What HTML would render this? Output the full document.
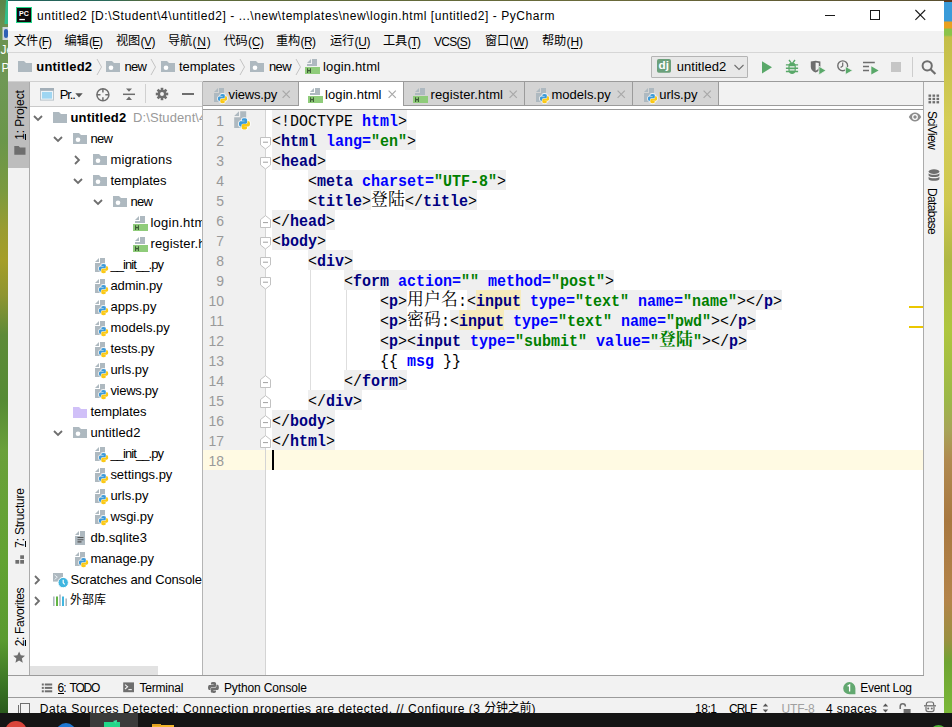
<!DOCTYPE html>
<html><head><meta charset="utf-8"><title>untitled2 - PyCharm</title>
<style>
html,body{margin:0;padding:0}
body{width:952px;height:727px;overflow:hidden;position:relative;background:#f2f2f2;font-family:"Liberation Sans",sans-serif}
.a{position:absolute;display:block}
.t{white-space:pre}
.c,.cb{font:400 16.5px/20px "Liberation Mono",monospace;transform:scaleX(.909);transform-origin:0 0}
.cb{font-weight:700}
</style></head><body>
<div class="a" style="left:0px;top:0px;width:8px;height:713px;background:linear-gradient(180deg,#5a8548 0px,#6a9050 25px,#6f9855 80px,#6a964a 140px,#7a9a40 190px,#9a9c30 230px,#a59e28 260px,#8f9530 295px,#5d8a38 335px,#558a34 400px,#6aa03a 450px,#62a232 560px,#5a9a30 640px,#3a7424 685px,#2a5a1c 713px);"></div>
<svg class="a" style="left:0px;top:0px;" width="8" height="80" viewBox="0 0 8 80"><path d="M6,0H8V24H4.5Z" fill="#2fbf8a"/><rect x="2.5" y="27" width="5.5" height="13" fill="#cfd6dc"/><rect x="4" y="29" width="4" height="9" rx="2" fill="#2f5fb4"/><text x="0.5" y="54" font-family="Liberation Sans,sans-serif" font-size="12" fill="#fff">Je</text><text x="1.5" y="71.5" font-family="Liberation Sans,sans-serif" font-size="12" fill="#fff">P</text></svg>
<div class="a" style="left:944px;top:0px;width:8px;height:713px;background:linear-gradient(180deg,#5a3a20 0px,#5a3a20 2px,#3a9bd9 2px,#3a9bd9 21px,#e8a020 22px,#e8a020 28px,#8bc34a 29px,#8bc34a 35px,#c4be48 37px,#d4cd56 120px,#cfc850 200px,#b0b844 260px,#aec63e 330px,#9cb848 400px,#a8a458 430px,#b08a50 460px,#a87840 520px,#b4844a 600px,#9a9040 640px,#6fa432 662px,#7ab838 713px);"></div>
<div class="a" style="left:0px;top:713px;width:952px;height:14px;background:#151515;"></div>
<div class="a" style="left:90px;top:713px;width:48px;height:14px;background:#3b3b3b;"></div>
<div class="a" style="left:5px;top:721px;width:22px;height:22px;background:#d9453b;border-radius:11px"></div>
<div class="a" style="left:56px;top:723px;width:20px;height:20px;background:#1e78d2;border-radius:10px"></div>
<svg class="a" style="left:103px;top:720px;" width="18" height="8" viewBox="0 0 18 8"><path d="M1,2H11L14,0V2H17V8H1Z" fill="#21d789"/><path d="M10,1L14,0L13,4Z" fill="#3ce0a0"/></svg>
<div class="a" style="left:152px;top:724.5px;width:22px;height:4px;background:#f2b62b;"></div>
<div class="a" style="left:152px;top:723.5px;width:9px;height:2px;background:#e0a020;"></div>
<div class="a" style="left:929.5px;top:724.6px;width:17px;height:17px;background:#4cb034;border-radius:9px"></div>
<div class="a" style="left:8px;top:0px;width:936px;height:713px;background:#f2f2f2;"></div>
<div class="a" style="left:8px;top:0px;width:936px;height:1px;background:linear-gradient(90deg,#1f5f5a 0px,#2a6a5a 100px,#5a6a3a 140px,#6a6a3a 600px,#5a5030 936px);"></div>
<div class="a" style="left:8px;top:1px;width:936px;height:30px;background:#ffffff;"></div>
<svg class="a" style="left:16px;top:7px;" width="16" height="16" viewBox="0 0 16 16"><rect x="0" y="0" width="16" height="16" fill="#21d789"/><rect x="1" y="1" width="14" height="14" fill="#0c0c0c"/><text x="3" y="8.8" font-family="Liberation Sans,sans-serif" font-weight="700" font-size="7.5" fill="#fff" textLength="9.8" lengthAdjust="spacingAndGlyphs">PC</text><rect x="3.3" y="11.9" width="5.6" height="1.3" fill="#fff"/></svg>
<span id="t1" class="a t" style="left:37px;top:9.84px;font:400 12px/12px 'Liberation Sans',sans-serif;color:#000;letter-spacing:0.547px;">untitled2 [D:\Student\4\untitled2] - ...\new\templates\new\login.html [untitled2] - PyCharm</span>
<div class="a" style="left:824.5px;top:15px;width:10.5px;height:1px;background:#1a1a1a;"></div>
<div class="a" style="left:870px;top:10px;width:10px;height:10px;background:transparent;border:1px solid #1a1a1a;box-sizing:border-box"></div>
<svg class="a" style="left:914px;top:9px;" width="13" height="12" viewBox="0 0 13 12"><path d="M1.4,1L11.2,10.8M11.2,1L1.4,10.8" stroke="#1a1a1a" stroke-width="1.1" fill="none"/></svg>
<div class="a" style="left:8px;top:31px;width:936px;height:21px;background:#f2f2f2;"></div>
<div class="a" style="left:8px;top:52px;width:936px;height:1px;background:#d6d6d6;"></div>
<span class="a t" style="left:14px;top:35.3px;font:400 12.2px/13px 'Liberation Sans','Noto Sans CJK SC',sans-serif;color:#000;letter-spacing:-0.1px;">文件</span>
<span id="t2" class="a t" style="left:38.6px;top:35.84px;font:400 12px/12px 'Liberation Sans',sans-serif;color:#000;letter-spacing:-0.964px;">(F)</span>
<div class="a" style="left:43.1px;top:47.5px;width:4.4px;height:1px;background:#000;"></div>
<span class="a t" style="left:64.5px;top:35.3px;font:400 12.2px/13px 'Liberation Sans','Noto Sans CJK SC',sans-serif;color:#000;letter-spacing:-0.1px;">编辑</span>
<span id="t3" class="a t" style="left:89.1px;top:35.84px;font:400 12px/12px 'Liberation Sans',sans-serif;color:#000;letter-spacing:-1.050px;">(E)</span>
<div class="a" style="left:93.6px;top:47.5px;width:4.9px;height:1px;background:#000;"></div>
<span class="a t" style="left:116px;top:35.3px;font:400 12.2px/13px 'Liberation Sans','Noto Sans CJK SC',sans-serif;color:#000;letter-spacing:-0.1px;">视图</span>
<span id="t4" class="a t" style="left:140.6px;top:35.84px;font:400 12px/12px 'Liberation Sans',sans-serif;color:#000;letter-spacing:-0.500px;">(V)</span>
<div class="a" style="left:145.1px;top:47.5px;width:6px;height:1px;background:#000;"></div>
<span class="a t" style="left:168px;top:35.3px;font:400 12.2px/13px 'Liberation Sans','Noto Sans CJK SC',sans-serif;color:#000;letter-spacing:-0.1px;">导航</span>
<span id="t5" class="a t" style="left:192.6px;top:35.84px;font:400 12px/12px 'Liberation Sans',sans-serif;color:#000;letter-spacing:0.714px;">(N)</span>
<div class="a" style="left:197.1px;top:47.5px;width:9.1px;height:1px;background:#000;"></div>
<span class="a t" style="left:223.5px;top:35.3px;font:400 12.2px/13px 'Liberation Sans','Noto Sans CJK SC',sans-serif;color:#000;letter-spacing:-0.1px;">代码</span>
<span id="t6" class="a t" style="left:248.1px;top:35.84px;font:400 12px/12px 'Liberation Sans',sans-serif;color:#000;letter-spacing:-0.386px;">(C)</span>
<div class="a" style="left:252.6px;top:47.5px;width:6.9px;height:1px;background:#000;"></div>
<span class="a t" style="left:276px;top:35.3px;font:400 12.2px/13px 'Liberation Sans','Noto Sans CJK SC',sans-serif;color:#000;letter-spacing:-0.1px;">重构</span>
<span id="t7" class="a t" style="left:300.6px;top:35.84px;font:400 12px/12px 'Liberation Sans',sans-serif;color:#000;letter-spacing:-0.636px;">(R)</span>
<div class="a" style="left:305.1px;top:47.5px;width:6.4px;height:1px;background:#000;"></div>
<span class="a t" style="left:330px;top:35.3px;font:400 12.2px/13px 'Liberation Sans','Noto Sans CJK SC',sans-serif;color:#000;letter-spacing:-0.1px;">运行</span>
<span id="t8" class="a t" style="left:354.6px;top:35.84px;font:400 12px/12px 'Liberation Sans',sans-serif;color:#000;letter-spacing:-0.336px;">(U)</span>
<div class="a" style="left:359.1px;top:47.5px;width:7px;height:1px;background:#000;"></div>
<span class="a t" style="left:383px;top:35.3px;font:400 12.2px/13px 'Liberation Sans','Noto Sans CJK SC',sans-serif;color:#000;letter-spacing:-0.1px;">工具</span>
<span id="t9" class="a t" style="left:407.6px;top:35.84px;font:400 12px/12px 'Liberation Sans',sans-serif;color:#000;letter-spacing:-0.964px;">(T)</span>
<div class="a" style="left:412.1px;top:47.5px;width:4.4px;height:1px;background:#000;"></div>
<span id="t10" class="a t" style="left:434px;top:35.84px;font:400 12px/12px 'Liberation Sans',sans-serif;color:#000;letter-spacing:-0.734px;">VCS(S)</span>
<div class="a" style="left:459.5px;top:47.5px;width:7px;height:1px;background:#000;"></div>
<span class="a t" style="left:485px;top:35.3px;font:400 12.2px/13px 'Liberation Sans','Noto Sans CJK SC',sans-serif;color:#000;letter-spacing:-0.1px;">窗口</span>
<span id="t11" class="a t" style="left:509.6px;top:35.84px;font:400 12px/12px 'Liberation Sans',sans-serif;color:#000;letter-spacing:-0.164px;">(W)</span>
<div class="a" style="left:514.1px;top:47.5px;width:10px;height:1px;background:#000;"></div>
<span class="a t" style="left:542px;top:35.3px;font:400 12.2px/13px 'Liberation Sans','Noto Sans CJK SC',sans-serif;color:#000;letter-spacing:-0.1px;">帮助</span>
<span id="t12" class="a t" style="left:566.6px;top:35.84px;font:400 12px/12px 'Liberation Sans',sans-serif;color:#000;letter-spacing:-0.136px;">(H)</span>
<div class="a" style="left:571.1px;top:47.5px;width:7.4px;height:1px;background:#000;"></div>
<div class="a" style="left:8px;top:53px;width:936px;height:27px;background:#f2f2f2;"></div>
<div class="a" style="left:8px;top:81px;width:195px;height:1px;background:#d0d0d0;"></div>
<div class="a" style="left:203px;top:81px;width:741px;height:1px;background:#9b9b9b;"></div>
<svg class="a" style="left:17px;top:57.7px;" width="16" height="16" viewBox="0 0 16 16"><path d="M1,3H7L9,5H15V14H1Z" fill="#aeb9c0"/></svg>
<span id="t13" class="a t" style="left:36.3px;top:60.00px;font:700 13px/13px 'Liberation Sans',sans-serif;color:#000;letter-spacing:0.191px;">untitled2</span>
<svg class="a" style="left:95.5px;top:58px;" width="7" height="18" viewBox="0 0 7 18"><path d="M1,1L5.5,9L1,17" fill="none" stroke="#c4c4c4" stroke-width="1"/></svg>
<svg class="a" style="left:105px;top:57.7px;" width="16" height="16" viewBox="0 0 16 16"><path d="M1,3H7L9,5H15V14H1Z" fill="#aeb9c0"/><circle cx="6" cy="9.7" r="2.3" fill="#fff"/></svg>
<span id="t14" class="a t" style="left:124.4px;top:60.00px;font:400 13px/13px 'Liberation Sans',sans-serif;color:#000;letter-spacing:-0.630px;">new</span>
<svg class="a" style="left:150px;top:58px;" width="7" height="18" viewBox="0 0 7 18"><path d="M1,1L5.5,9L1,17" fill="none" stroke="#c4c4c4" stroke-width="1"/></svg>
<svg class="a" style="left:160px;top:57.7px;" width="16" height="16" viewBox="0 0 16 16"><path d="M1,3H7L9,5H15V14H1Z" fill="#aeb9c0"/><circle cx="6" cy="9.7" r="2.3" fill="#fff"/></svg>
<span id="t15" class="a t" style="left:179px;top:60.00px;font:400 13px/13px 'Liberation Sans',sans-serif;color:#000;letter-spacing:-0.047px;">templates</span>
<svg class="a" style="left:238.5px;top:58px;" width="7" height="18" viewBox="0 0 7 18"><path d="M1,1L5.5,9L1,17" fill="none" stroke="#c4c4c4" stroke-width="1"/></svg>
<svg class="a" style="left:249px;top:57.7px;" width="16" height="16" viewBox="0 0 16 16"><path d="M1,3H7L9,5H15V14H1Z" fill="#aeb9c0"/><circle cx="6" cy="9.7" r="2.3" fill="#fff"/></svg>
<span id="t16" class="a t" style="left:269px;top:60.00px;font:400 13px/13px 'Liberation Sans',sans-serif;color:#000;letter-spacing:-0.630px;">new</span>
<svg class="a" style="left:294.5px;top:58px;" width="7" height="18" viewBox="0 0 7 18"><path d="M1,1L5.5,9L1,17" fill="none" stroke="#c4c4c4" stroke-width="1"/></svg>
<svg class="a" style="left:303.7px;top:57.5px;" width="17" height="17" viewBox="0 0 17 17"><path d="M3,5L7,1V5Z" fill="#aeb9c0"/><path d="M8,1H13V8H3V6H8Z" fill="#aeb9c0"/><rect x="1" y="9" width="15" height="7" fill="#8fcc7a"/><path d="M3.6,10.2V15M6.4,10.2V15M3.6,12.6H6.4" stroke="#3b5a34" stroke-width="1.1" fill="none"/></svg>
<span id="t17" class="a t" style="left:323px;top:60.00px;font:400 13px/13px 'Liberation Sans',sans-serif;color:#000;letter-spacing:0.151px;">login.html</span>
<div class="a" style="left:651px;top:56px;width:97px;height:22px;background:#e8e8e8;border:1px solid #b4b4b4;box-sizing:border-box;border-radius:1px"></div>
<svg class="a" style="left:657px;top:59px;" width="14" height="15" viewBox="0 0 14 15"><rect x="0" y="0" width="14" height="13.8" rx="1.8" fill="#6ba07b"/><text x="1.6" y="10.4" font-family="Liberation Sans,sans-serif" font-weight="700" font-size="11.5" fill="#fff" textLength="10.4" lengthAdjust="spacingAndGlyphs">dj</text></svg>
<span id="t18" class="a t" style="left:676.7px;top:60.00px;font:400 13px/13px 'Liberation Sans',sans-serif;color:#000;letter-spacing:0.043px;">untitled2</span>
<svg class="a" style="left:733px;top:62px;" width="12" height="10" viewBox="0 0 12 10"><path d="M1.5,3L6,7.5L10.5,3" fill="none" stroke="#6e6e6e" stroke-width="1.1"/></svg>
<svg class="a" style="left:760px;top:59px;" width="16" height="16" viewBox="0 0 16 16"><path d="M2,2.2L12,8.2L2,14.4Z" fill="#59a869"/></svg>
<svg class="a" style="left:784px;top:59px;" width="16" height="16" viewBox="0 0 16 16"><g stroke="#59a869" stroke-width="1.4" fill="none"><path d="M1.9,5.9H14.1M1.9,9.3H14.1M1.9,12.5H14.1M5,1L7,3.6M11,1L9,3.6"/></g><path d="M4.4,7.4C4.4,2 11.8,2 11.8,7.4V11C11.8,16.4 4.4,16.4 4.4,11Z" fill="#59a869"/><path d="M5.6,7.8H10.6M5.6,10.9H10.6" stroke="#f2f2f2" stroke-width="1.2"/></svg>
<svg class="a" style="left:809px;top:59px;" width="18" height="16" viewBox="0 0 18 16"><path d="M1.8,2.6L6.6,1.8L11.4,2.6V8C11.4,11 9,12.8 6.6,13.6C4.2,12.8 1.8,11 1.8,8Z" fill="#6e6e6e"/><path d="M6.6,3.4L9.8,3.9V8C9.8,9.8 8.4,11 6.6,11.8Z" fill="#f2f2f2"/><path d="M9.9,7.2L17,11.5L9.9,15.9Z" fill="#59a869" stroke="#f2f2f2" stroke-width=".8"/></svg>
<svg class="a" style="left:836px;top:59px;" width="18" height="16" viewBox="0 0 18 16"><circle cx="6.7" cy="6.8" r="4.9" fill="none" stroke="#6e6e6e" stroke-width="1.4"/><path d="M6.7,3.6V7L4.6,8.6" fill="none" stroke="#6e6e6e" stroke-width="1.2"/><path d="M9.4,7.4L16.6,11.5L9.4,15.6Z" fill="#59a869" stroke="#f2f2f2" stroke-width=".8"/></svg>
<svg class="a" style="left:862px;top:59px;" width="18" height="16" viewBox="0 0 18 16"><path d="M1,3.6H12.8M1,7.6H7M1,11.4H7" stroke="#6e6e6e" stroke-width="1.5"/><path d="M9.3,7.2L16.6,11.4L9.3,15.6Z" fill="#59a869"/></svg>
<div class="a" style="left:891px;top:61.7px;width:10.3px;height:10.3px;background:#c6c6c6;"></div>
<div class="a" style="left:912px;top:57px;width:1px;height:19.5px;background:#cdcdcd;"></div>
<svg class="a" style="left:919px;top:58px;" width="18" height="18" viewBox="0 0 18 18"><circle cx="8.2" cy="7.8" r="4.6" fill="none" stroke="#6e6e6e" stroke-width="2"/><path d="M11.6,11.2L16.4,16" stroke="#6e6e6e" stroke-width="2.2"/></svg>
<div class="a" style="left:8px;top:81.5px;width:21px;height:594px;background:#f2f2f2;"></div>
<div class="a" style="left:29px;top:82px;width:1px;height:593px;background:#ababab;"></div>
<div class="a" style="left:8px;top:81.5px;width:21px;height:86px;background:#bdbdbd;"></div>
<div class="a" style="left:20.2px;top:115.2px;width:0;height:0"><span id="t19" class="a t" style="left:-34.8px;top:-6px;width:69.6px;text-align:center;font:400 12px/12px 'Liberation Sans',sans-serif;color:#000;letter-spacing:-0.123px;transform:rotate(-90deg);transform-origin:50% 50%">1: Project</span></div>
<div class="a" style="left:25.2px;top:133.5px;width:1px;height:6px;background:#000;"></div>
<svg class="a" style="left:13.5px;top:145px;" width="12" height="10" viewBox="0 0 12 10"><path d="M0.3,1H4.6L6,2.6H11.5V9.7H0.3Z" fill="#6e6e6e"/></svg>
<div class="a" style="left:20.2px;top:517.5px;width:0;height:0"><span id="t20" class="a t" style="left:-39.85px;top:-6px;width:79.7px;text-align:center;font:400 12px/12px 'Liberation Sans',sans-serif;color:#000;letter-spacing:-0.212px;transform:rotate(-90deg);transform-origin:50% 50%">7: Structure</span></div>
<div class="a" style="left:25.2px;top:541px;width:1px;height:6px;background:#000;"></div>
<svg class="a" style="left:14.5px;top:554.5px;" width="10" height="9" viewBox="0 0 10 9"><rect x="5.2" y="0.3" width="3.8" height="3.6" fill="#6e6e6e"/><rect x="0.4" y="5" width="3.8" height="3.7" fill="#6e6e6e"/><rect x="5.2" y="5" width="3.8" height="3.7" fill="#6e6e6e"/></svg>
<div class="a" style="left:20.2px;top:617px;width:0;height:0"><span id="t21" class="a t" style="left:-39.4px;top:-6px;width:78.8px;text-align:center;font:400 12px/12px 'Liberation Sans',sans-serif;color:#000;letter-spacing:-0.355px;transform:rotate(-90deg);transform-origin:50% 50%">2: Favorites</span></div>
<div class="a" style="left:25.2px;top:640px;width:1px;height:6px;background:#000;"></div>
<svg class="a" style="left:13.3px;top:651px;" width="13" height="13" viewBox="0 0 13 13"><path d="M6.5,0.4L8.3,4.6L12.8,5L9.4,8L10.4,12.5L6.5,10.1L2.6,12.5L3.6,8L0.2,5L4.7,4.6Z" fill="#6e6e6e" transform="scale(.94)"/></svg>
<div class="a" style="left:30px;top:82px;width:172px;height:24px;background:#f3f3f3;"></div>
<div class="a" style="left:30px;top:106px;width:172px;height:1px;background:#cacaca;"></div>
<div class="a" style="left:30px;top:107px;width:172px;height:568px;background:#ffffff;"></div>
<div class="a" style="left:202px;top:82px;width:1px;height:593px;background:#b4b4b4;"></div>
<svg class="a" style="left:40px;top:88px;" width="14" height="13" viewBox="0 0 14 13"><rect x="0" y="0" width="14" height="12.6" fill="#b9c4cb"/><rect x="0" y="0" width="14" height="2.4" fill="#a3afb8"/><rect x="1" y="3" width="12" height="8.6" fill="#eef4f8"/><rect x="2" y="4" width="10" height="6.6" fill="#9fd6f2"/></svg>
<span id="t22" class="a t" style="left:59.8px;top:87.60px;font:400 13px/13px 'Liberation Sans',sans-serif;color:#000;letter-spacing:-1.172px;">Pr..</span>
<svg class="a" style="left:75px;top:93px;" width="8" height="5" viewBox="0 0 8 5"><path d="M0.3,0.3H7.7L4,4.6Z" fill="#555"/></svg>
<svg class="a" style="left:95px;top:86.5px;" width="16" height="16" viewBox="0 0 16 16"><circle cx="7.9" cy="7.8" r="6" fill="none" stroke="#6e6e6e" stroke-width="1.5"/><path d="M7.9,1.8V5.4M7.9,10.2V13.8M1.9,7.8H5.5M10.3,7.8H13.9" stroke="#6e6e6e" stroke-width="1.5"/></svg>
<svg class="a" style="left:122px;top:87px;" width="14" height="14" viewBox="0 0 14 14"><path d="M1,7.3H13" stroke="#6e6e6e" stroke-width="1.5"/><path d="M4,1.4H10L7,4.8Z M4,13H10L7,9.6Z" fill="#6e6e6e"/></svg>
<div class="a" style="left:145px;top:84px;width:1px;height:19px;background:#d0d0d0;"></div>
<svg class="a" style="left:154.9px;top:87.3px;" width="14" height="14" viewBox="0 0 16 16"><g fill="#6e6e6e"><circle cx="8" cy="8" r="4.9"/><rect x="6.5" y="0.9" width="3" height="3.4" transform="rotate(0 8 8)"/><rect x="6.5" y="0.9" width="3" height="3.4" transform="rotate(45 8 8)"/><rect x="6.5" y="0.9" width="3" height="3.4" transform="rotate(90 8 8)"/><rect x="6.5" y="0.9" width="3" height="3.4" transform="rotate(135 8 8)"/><rect x="6.5" y="0.9" width="3" height="3.4" transform="rotate(180 8 8)"/><rect x="6.5" y="0.9" width="3" height="3.4" transform="rotate(225 8 8)"/><rect x="6.5" y="0.9" width="3" height="3.4" transform="rotate(270 8 8)"/><rect x="6.5" y="0.9" width="3" height="3.4" transform="rotate(315 8 8)"/></g><circle cx="8" cy="8" r="2.2" fill="#f3f3f3"/></svg>
<div class="a" style="left:181.9px;top:93px;width:12.1px;height:2px;background:#6e6e6e;"></div>
<div class="a" style="left:30px;top:107px;width:172px;height:568px;overflow:hidden">
<svg class="a" style="left:-0.5px;top:2.8px;" width="16" height="16" viewBox="0 0 16 16"><path d="M4,6L8,10L12,6" fill="none" stroke="#6e6e6e" stroke-width="1.8"/></svg>
<svg class="a" style="left:22px;top:2px;" width="16" height="16" viewBox="0 0 16 16"><path d="M1,3H7L9,5H15V14H1Z" fill="#aeb9c0"/></svg>
<span id="t23" class="a t" style="left:40.4px;top:3.90px;font:700 13px/13px 'Liberation Sans',sans-serif;color:#000;letter-spacing:0.204px;">untitled2</span>
<span id="t24" class="a t" style="left:103px;top:3.90px;font:400 13px/13px 'Liberation Sans',sans-serif;color:#9a9a9a;letter-spacing:0.094px;">D:\Student\4\untitled2</span>
<svg class="a" style="left:19.5px;top:23.8px;" width="16" height="16" viewBox="0 0 16 16"><path d="M4,6L8,10L12,6" fill="none" stroke="#6e6e6e" stroke-width="1.8"/></svg>
<svg class="a" style="left:42px;top:23px;" width="16" height="16" viewBox="0 0 16 16"><path d="M1,3H7L9,5H15V14H1Z" fill="#aeb9c0"/><circle cx="6" cy="9.7" r="2.3" fill="#fff"/></svg>
<span id="t25" class="a t" style="left:60.4px;top:24.90px;font:400 13px/13px 'Liberation Sans',sans-serif;color:#000;letter-spacing:-0.630px;">new</span>
<svg class="a" style="left:38.7px;top:44.7px;" width="16" height="16" viewBox="0 0 16 16"><path d="M6,4L10,8L6,12" fill="none" stroke="#6e6e6e" stroke-width="1.8"/></svg>
<svg class="a" style="left:62px;top:44px;" width="16" height="16" viewBox="0 0 16 16"><path d="M1,3H7L9,5H15V14H1Z" fill="#aeb9c0"/><circle cx="6" cy="9.7" r="2.3" fill="#fff"/></svg>
<span id="t26" class="a t" style="left:80.4px;top:45.90px;font:400 13px/13px 'Liberation Sans',sans-serif;color:#000;letter-spacing:0.170px;">migrations</span>
<svg class="a" style="left:39.5px;top:65.8px;" width="16" height="16" viewBox="0 0 16 16"><path d="M4,6L8,10L12,6" fill="none" stroke="#6e6e6e" stroke-width="1.8"/></svg>
<svg class="a" style="left:62px;top:65px;" width="16" height="16" viewBox="0 0 16 16"><path d="M1,3H7L9,5H15V14H1Z" fill="#aeb9c0"/><circle cx="6" cy="9.7" r="2.3" fill="#fff"/></svg>
<span id="t27" class="a t" style="left:80.4px;top:66.90px;font:400 13px/13px 'Liberation Sans',sans-serif;color:#000;letter-spacing:-0.047px;">templates</span>
<svg class="a" style="left:59.5px;top:86.8px;" width="16" height="16" viewBox="0 0 16 16"><path d="M4,6L8,10L12,6" fill="none" stroke="#6e6e6e" stroke-width="1.8"/></svg>
<svg class="a" style="left:82px;top:86px;" width="16" height="16" viewBox="0 0 16 16"><path d="M1,3H7L9,5H15V14H1Z" fill="#aeb9c0"/><circle cx="6" cy="9.7" r="2.3" fill="#fff"/></svg>
<span id="t28" class="a t" style="left:100.4px;top:87.90px;font:400 13px/13px 'Liberation Sans',sans-serif;color:#000;letter-spacing:-0.630px;">new</span>
<svg class="a" style="left:102px;top:108px;" width="17" height="17" viewBox="0 0 17 17"><path d="M3,5L7,1V5Z" fill="#aeb9c0"/><path d="M8,1H13V8H3V6H8Z" fill="#aeb9c0"/><rect x="1" y="9" width="15" height="7" fill="#8fcc7a"/><path d="M3.6,10.2V15M6.4,10.2V15M3.6,12.6H6.4" stroke="#3b5a34" stroke-width="1.1" fill="none"/></svg>
<span id="t29" class="a t" style="left:120.4px;top:108.90px;font:400 13px/13px 'Liberation Sans',sans-serif;color:#000;letter-spacing:0.262px;">login.html</span>
<svg class="a" style="left:102px;top:129px;" width="17" height="17" viewBox="0 0 17 17"><path d="M3,5L7,1V5Z" fill="#aeb9c0"/><path d="M8,1H13V8H3V6H8Z" fill="#aeb9c0"/><rect x="1" y="9" width="15" height="7" fill="#8fcc7a"/><path d="M3.6,10.2V15M6.4,10.2V15M3.6,12.6H6.4" stroke="#3b5a34" stroke-width="1.1" fill="none"/></svg>
<span id="t30" class="a t" style="left:120.4px;top:129.90px;font:400 13px/13px 'Liberation Sans',sans-serif;color:#000;letter-spacing:0.182px;">register.html</span>
<svg class="a" style="left:64px;top:150px;" width="17" height="17" viewBox="0 0 17 17"><g transform="scale(1)"><path d="M1,5L5,1V5Z" fill="#aeb9c0"/><path d="M6,1H11V15H1V6H6Z" fill="#aeb9c0"/><g transform="translate(4.9,6.9) scale(0.93)"><g fill="#fff" stroke="#fff" stroke-width="1.7" opacity=".85"><path d="M5,0C2.5,0 2.7,1.1 2.7,1.1V2.3H5.1V2.7H1.6C1.6,2.7 0,2.5 0,5C0,7.5 1.4,7.4 1.4,7.4H2.3V6.2C2.3,6.2 2.2,4.8 3.7,4.8H6.1C6.1,4.8 7.4,4.8 7.4,3.5V1.3C7.4,1.3 7.6,0 5,0Z"/><path d="M5,0C2.5,0 2.7,1.1 2.7,1.1V2.3H5.1V2.7H1.6C1.6,2.7 0,2.5 0,5C0,7.5 1.4,7.4 1.4,7.4H2.3V6.2C2.3,6.2 2.2,4.8 3.7,4.8H6.1C6.1,4.8 7.4,4.8 7.4,3.5V1.3C7.4,1.3 7.6,0 5,0Z" transform="rotate(180 5 5)"/></g><path d="M5,0C2.5,0 2.7,1.1 2.7,1.1V2.3H5.1V2.7H1.6C1.6,2.7 0,2.5 0,5C0,7.5 1.4,7.4 1.4,7.4H2.3V6.2C2.3,6.2 2.2,4.8 3.7,4.8H6.1C6.1,4.8 7.4,4.8 7.4,3.5V1.3C7.4,1.3 7.6,0 5,0Z" fill="#3d9ad8"/><path d="M5,0C2.5,0 2.7,1.1 2.7,1.1V2.3H5.1V2.7H1.6C1.6,2.7 0,2.5 0,5C0,7.5 1.4,7.4 1.4,7.4H2.3V6.2C2.3,6.2 2.2,4.8 3.7,4.8H6.1C6.1,4.8 7.4,4.8 7.4,3.5V1.3C7.4,1.3 7.6,0 5,0Z" fill="#fbc916" transform="rotate(180 5 5)"/></g></g></svg>
<span id="t31" class="a t" style="left:80.4px;top:150.90px;font:400 13px/13px 'Liberation Sans',sans-serif;color:#000;letter-spacing:-0.929px;">__init__.py</span>
<svg class="a" style="left:64px;top:171px;" width="17" height="17" viewBox="0 0 17 17"><g transform="scale(1)"><path d="M1,5L5,1V5Z" fill="#aeb9c0"/><path d="M6,1H11V15H1V6H6Z" fill="#aeb9c0"/><g transform="translate(4.9,6.9) scale(0.93)"><g fill="#fff" stroke="#fff" stroke-width="1.7" opacity=".85"><path d="M5,0C2.5,0 2.7,1.1 2.7,1.1V2.3H5.1V2.7H1.6C1.6,2.7 0,2.5 0,5C0,7.5 1.4,7.4 1.4,7.4H2.3V6.2C2.3,6.2 2.2,4.8 3.7,4.8H6.1C6.1,4.8 7.4,4.8 7.4,3.5V1.3C7.4,1.3 7.6,0 5,0Z"/><path d="M5,0C2.5,0 2.7,1.1 2.7,1.1V2.3H5.1V2.7H1.6C1.6,2.7 0,2.5 0,5C0,7.5 1.4,7.4 1.4,7.4H2.3V6.2C2.3,6.2 2.2,4.8 3.7,4.8H6.1C6.1,4.8 7.4,4.8 7.4,3.5V1.3C7.4,1.3 7.6,0 5,0Z" transform="rotate(180 5 5)"/></g><path d="M5,0C2.5,0 2.7,1.1 2.7,1.1V2.3H5.1V2.7H1.6C1.6,2.7 0,2.5 0,5C0,7.5 1.4,7.4 1.4,7.4H2.3V6.2C2.3,6.2 2.2,4.8 3.7,4.8H6.1C6.1,4.8 7.4,4.8 7.4,3.5V1.3C7.4,1.3 7.6,0 5,0Z" fill="#3d9ad8"/><path d="M5,0C2.5,0 2.7,1.1 2.7,1.1V2.3H5.1V2.7H1.6C1.6,2.7 0,2.5 0,5C0,7.5 1.4,7.4 1.4,7.4H2.3V6.2C2.3,6.2 2.2,4.8 3.7,4.8H6.1C6.1,4.8 7.4,4.8 7.4,3.5V1.3C7.4,1.3 7.6,0 5,0Z" fill="#fbc916" transform="rotate(180 5 5)"/></g></g></svg>
<span id="t32" class="a t" style="left:80.4px;top:171.90px;font:400 13px/13px 'Liberation Sans',sans-serif;color:#000;letter-spacing:-0.079px;">admin.py</span>
<svg class="a" style="left:64px;top:192px;" width="17" height="17" viewBox="0 0 17 17"><g transform="scale(1)"><path d="M1,5L5,1V5Z" fill="#aeb9c0"/><path d="M6,1H11V15H1V6H6Z" fill="#aeb9c0"/><g transform="translate(4.9,6.9) scale(0.93)"><g fill="#fff" stroke="#fff" stroke-width="1.7" opacity=".85"><path d="M5,0C2.5,0 2.7,1.1 2.7,1.1V2.3H5.1V2.7H1.6C1.6,2.7 0,2.5 0,5C0,7.5 1.4,7.4 1.4,7.4H2.3V6.2C2.3,6.2 2.2,4.8 3.7,4.8H6.1C6.1,4.8 7.4,4.8 7.4,3.5V1.3C7.4,1.3 7.6,0 5,0Z"/><path d="M5,0C2.5,0 2.7,1.1 2.7,1.1V2.3H5.1V2.7H1.6C1.6,2.7 0,2.5 0,5C0,7.5 1.4,7.4 1.4,7.4H2.3V6.2C2.3,6.2 2.2,4.8 3.7,4.8H6.1C6.1,4.8 7.4,4.8 7.4,3.5V1.3C7.4,1.3 7.6,0 5,0Z" transform="rotate(180 5 5)"/></g><path d="M5,0C2.5,0 2.7,1.1 2.7,1.1V2.3H5.1V2.7H1.6C1.6,2.7 0,2.5 0,5C0,7.5 1.4,7.4 1.4,7.4H2.3V6.2C2.3,6.2 2.2,4.8 3.7,4.8H6.1C6.1,4.8 7.4,4.8 7.4,3.5V1.3C7.4,1.3 7.6,0 5,0Z" fill="#3d9ad8"/><path d="M5,0C2.5,0 2.7,1.1 2.7,1.1V2.3H5.1V2.7H1.6C1.6,2.7 0,2.5 0,5C0,7.5 1.4,7.4 1.4,7.4H2.3V6.2C2.3,6.2 2.2,4.8 3.7,4.8H6.1C6.1,4.8 7.4,4.8 7.4,3.5V1.3C7.4,1.3 7.6,0 5,0Z" fill="#fbc916" transform="rotate(180 5 5)"/></g></g></svg>
<span id="t33" class="a t" style="left:80.4px;top:192.90px;font:400 13px/13px 'Liberation Sans',sans-serif;color:#000;letter-spacing:0.076px;">apps.py</span>
<svg class="a" style="left:64px;top:213px;" width="17" height="17" viewBox="0 0 17 17"><g transform="scale(1)"><path d="M1,5L5,1V5Z" fill="#aeb9c0"/><path d="M6,1H11V15H1V6H6Z" fill="#aeb9c0"/><g transform="translate(4.9,6.9) scale(0.93)"><g fill="#fff" stroke="#fff" stroke-width="1.7" opacity=".85"><path d="M5,0C2.5,0 2.7,1.1 2.7,1.1V2.3H5.1V2.7H1.6C1.6,2.7 0,2.5 0,5C0,7.5 1.4,7.4 1.4,7.4H2.3V6.2C2.3,6.2 2.2,4.8 3.7,4.8H6.1C6.1,4.8 7.4,4.8 7.4,3.5V1.3C7.4,1.3 7.6,0 5,0Z"/><path d="M5,0C2.5,0 2.7,1.1 2.7,1.1V2.3H5.1V2.7H1.6C1.6,2.7 0,2.5 0,5C0,7.5 1.4,7.4 1.4,7.4H2.3V6.2C2.3,6.2 2.2,4.8 3.7,4.8H6.1C6.1,4.8 7.4,4.8 7.4,3.5V1.3C7.4,1.3 7.6,0 5,0Z" transform="rotate(180 5 5)"/></g><path d="M5,0C2.5,0 2.7,1.1 2.7,1.1V2.3H5.1V2.7H1.6C1.6,2.7 0,2.5 0,5C0,7.5 1.4,7.4 1.4,7.4H2.3V6.2C2.3,6.2 2.2,4.8 3.7,4.8H6.1C6.1,4.8 7.4,4.8 7.4,3.5V1.3C7.4,1.3 7.6,0 5,0Z" fill="#3d9ad8"/><path d="M5,0C2.5,0 2.7,1.1 2.7,1.1V2.3H5.1V2.7H1.6C1.6,2.7 0,2.5 0,5C0,7.5 1.4,7.4 1.4,7.4H2.3V6.2C2.3,6.2 2.2,4.8 3.7,4.8H6.1C6.1,4.8 7.4,4.8 7.4,3.5V1.3C7.4,1.3 7.6,0 5,0Z" fill="#fbc916" transform="rotate(180 5 5)"/></g></g></svg>
<span id="t34" class="a t" style="left:80.4px;top:213.90px;font:400 13px/13px 'Liberation Sans',sans-serif;color:#000;letter-spacing:0.019px;">models.py</span>
<svg class="a" style="left:64px;top:234px;" width="17" height="17" viewBox="0 0 17 17"><g transform="scale(1)"><path d="M1,5L5,1V5Z" fill="#aeb9c0"/><path d="M6,1H11V15H1V6H6Z" fill="#aeb9c0"/><g transform="translate(4.9,6.9) scale(0.93)"><g fill="#fff" stroke="#fff" stroke-width="1.7" opacity=".85"><path d="M5,0C2.5,0 2.7,1.1 2.7,1.1V2.3H5.1V2.7H1.6C1.6,2.7 0,2.5 0,5C0,7.5 1.4,7.4 1.4,7.4H2.3V6.2C2.3,6.2 2.2,4.8 3.7,4.8H6.1C6.1,4.8 7.4,4.8 7.4,3.5V1.3C7.4,1.3 7.6,0 5,0Z"/><path d="M5,0C2.5,0 2.7,1.1 2.7,1.1V2.3H5.1V2.7H1.6C1.6,2.7 0,2.5 0,5C0,7.5 1.4,7.4 1.4,7.4H2.3V6.2C2.3,6.2 2.2,4.8 3.7,4.8H6.1C6.1,4.8 7.4,4.8 7.4,3.5V1.3C7.4,1.3 7.6,0 5,0Z" transform="rotate(180 5 5)"/></g><path d="M5,0C2.5,0 2.7,1.1 2.7,1.1V2.3H5.1V2.7H1.6C1.6,2.7 0,2.5 0,5C0,7.5 1.4,7.4 1.4,7.4H2.3V6.2C2.3,6.2 2.2,4.8 3.7,4.8H6.1C6.1,4.8 7.4,4.8 7.4,3.5V1.3C7.4,1.3 7.6,0 5,0Z" fill="#3d9ad8"/><path d="M5,0C2.5,0 2.7,1.1 2.7,1.1V2.3H5.1V2.7H1.6C1.6,2.7 0,2.5 0,5C0,7.5 1.4,7.4 1.4,7.4H2.3V6.2C2.3,6.2 2.2,4.8 3.7,4.8H6.1C6.1,4.8 7.4,4.8 7.4,3.5V1.3C7.4,1.3 7.6,0 5,0Z" fill="#fbc916" transform="rotate(180 5 5)"/></g></g></svg>
<span id="t35" class="a t" style="left:80.4px;top:234.90px;font:400 13px/13px 'Liberation Sans',sans-serif;color:#000;letter-spacing:-0.114px;">tests.py</span>
<svg class="a" style="left:64px;top:255px;" width="17" height="17" viewBox="0 0 17 17"><g transform="scale(1)"><path d="M1,5L5,1V5Z" fill="#aeb9c0"/><path d="M6,1H11V15H1V6H6Z" fill="#aeb9c0"/><g transform="translate(4.9,6.9) scale(0.93)"><g fill="#fff" stroke="#fff" stroke-width="1.7" opacity=".85"><path d="M5,0C2.5,0 2.7,1.1 2.7,1.1V2.3H5.1V2.7H1.6C1.6,2.7 0,2.5 0,5C0,7.5 1.4,7.4 1.4,7.4H2.3V6.2C2.3,6.2 2.2,4.8 3.7,4.8H6.1C6.1,4.8 7.4,4.8 7.4,3.5V1.3C7.4,1.3 7.6,0 5,0Z"/><path d="M5,0C2.5,0 2.7,1.1 2.7,1.1V2.3H5.1V2.7H1.6C1.6,2.7 0,2.5 0,5C0,7.5 1.4,7.4 1.4,7.4H2.3V6.2C2.3,6.2 2.2,4.8 3.7,4.8H6.1C6.1,4.8 7.4,4.8 7.4,3.5V1.3C7.4,1.3 7.6,0 5,0Z" transform="rotate(180 5 5)"/></g><path d="M5,0C2.5,0 2.7,1.1 2.7,1.1V2.3H5.1V2.7H1.6C1.6,2.7 0,2.5 0,5C0,7.5 1.4,7.4 1.4,7.4H2.3V6.2C2.3,6.2 2.2,4.8 3.7,4.8H6.1C6.1,4.8 7.4,4.8 7.4,3.5V1.3C7.4,1.3 7.6,0 5,0Z" fill="#3d9ad8"/><path d="M5,0C2.5,0 2.7,1.1 2.7,1.1V2.3H5.1V2.7H1.6C1.6,2.7 0,2.5 0,5C0,7.5 1.4,7.4 1.4,7.4H2.3V6.2C2.3,6.2 2.2,4.8 3.7,4.8H6.1C6.1,4.8 7.4,4.8 7.4,3.5V1.3C7.4,1.3 7.6,0 5,0Z" fill="#fbc916" transform="rotate(180 5 5)"/></g></g></svg>
<span id="t36" class="a t" style="left:80.4px;top:255.90px;font:400 13px/13px 'Liberation Sans',sans-serif;color:#000;letter-spacing:-0.049px;">urls.py</span>
<svg class="a" style="left:64px;top:276px;" width="17" height="17" viewBox="0 0 17 17"><g transform="scale(1)"><path d="M1,5L5,1V5Z" fill="#aeb9c0"/><path d="M6,1H11V15H1V6H6Z" fill="#aeb9c0"/><g transform="translate(4.9,6.9) scale(0.93)"><g fill="#fff" stroke="#fff" stroke-width="1.7" opacity=".85"><path d="M5,0C2.5,0 2.7,1.1 2.7,1.1V2.3H5.1V2.7H1.6C1.6,2.7 0,2.5 0,5C0,7.5 1.4,7.4 1.4,7.4H2.3V6.2C2.3,6.2 2.2,4.8 3.7,4.8H6.1C6.1,4.8 7.4,4.8 7.4,3.5V1.3C7.4,1.3 7.6,0 5,0Z"/><path d="M5,0C2.5,0 2.7,1.1 2.7,1.1V2.3H5.1V2.7H1.6C1.6,2.7 0,2.5 0,5C0,7.5 1.4,7.4 1.4,7.4H2.3V6.2C2.3,6.2 2.2,4.8 3.7,4.8H6.1C6.1,4.8 7.4,4.8 7.4,3.5V1.3C7.4,1.3 7.6,0 5,0Z" transform="rotate(180 5 5)"/></g><path d="M5,0C2.5,0 2.7,1.1 2.7,1.1V2.3H5.1V2.7H1.6C1.6,2.7 0,2.5 0,5C0,7.5 1.4,7.4 1.4,7.4H2.3V6.2C2.3,6.2 2.2,4.8 3.7,4.8H6.1C6.1,4.8 7.4,4.8 7.4,3.5V1.3C7.4,1.3 7.6,0 5,0Z" fill="#3d9ad8"/><path d="M5,0C2.5,0 2.7,1.1 2.7,1.1V2.3H5.1V2.7H1.6C1.6,2.7 0,2.5 0,5C0,7.5 1.4,7.4 1.4,7.4H2.3V6.2C2.3,6.2 2.2,4.8 3.7,4.8H6.1C6.1,4.8 7.4,4.8 7.4,3.5V1.3C7.4,1.3 7.6,0 5,0Z" fill="#fbc916" transform="rotate(180 5 5)"/></g></g></svg>
<span id="t37" class="a t" style="left:80.4px;top:276.90px;font:400 13px/13px 'Liberation Sans',sans-serif;color:#000;letter-spacing:-0.294px;">views.py</span>
<svg class="a" style="left:42px;top:297px;" width="16" height="16" viewBox="0 0 16 16"><path d="M1,3H7L9,5H15V14H1Z" fill="#d0c0f8"/></svg>
<span id="t38" class="a t" style="left:60.4px;top:297.90px;font:400 13px/13px 'Liberation Sans',sans-serif;color:#000;letter-spacing:-0.047px;">templates</span>
<svg class="a" style="left:19.5px;top:317.8px;" width="16" height="16" viewBox="0 0 16 16"><path d="M4,6L8,10L12,6" fill="none" stroke="#6e6e6e" stroke-width="1.8"/></svg>
<svg class="a" style="left:42px;top:317px;" width="16" height="16" viewBox="0 0 16 16"><path d="M1,3H7L9,5H15V14H1Z" fill="#aeb9c0"/><circle cx="6" cy="9.7" r="2.3" fill="#fff"/></svg>
<span id="t39" class="a t" style="left:60.4px;top:318.90px;font:400 13px/13px 'Liberation Sans',sans-serif;color:#000;letter-spacing:0.105px;">untitled2</span>
<svg class="a" style="left:64px;top:339px;" width="17" height="17" viewBox="0 0 17 17"><g transform="scale(1)"><path d="M1,5L5,1V5Z" fill="#aeb9c0"/><path d="M6,1H11V15H1V6H6Z" fill="#aeb9c0"/><g transform="translate(4.9,6.9) scale(0.93)"><g fill="#fff" stroke="#fff" stroke-width="1.7" opacity=".85"><path d="M5,0C2.5,0 2.7,1.1 2.7,1.1V2.3H5.1V2.7H1.6C1.6,2.7 0,2.5 0,5C0,7.5 1.4,7.4 1.4,7.4H2.3V6.2C2.3,6.2 2.2,4.8 3.7,4.8H6.1C6.1,4.8 7.4,4.8 7.4,3.5V1.3C7.4,1.3 7.6,0 5,0Z"/><path d="M5,0C2.5,0 2.7,1.1 2.7,1.1V2.3H5.1V2.7H1.6C1.6,2.7 0,2.5 0,5C0,7.5 1.4,7.4 1.4,7.4H2.3V6.2C2.3,6.2 2.2,4.8 3.7,4.8H6.1C6.1,4.8 7.4,4.8 7.4,3.5V1.3C7.4,1.3 7.6,0 5,0Z" transform="rotate(180 5 5)"/></g><path d="M5,0C2.5,0 2.7,1.1 2.7,1.1V2.3H5.1V2.7H1.6C1.6,2.7 0,2.5 0,5C0,7.5 1.4,7.4 1.4,7.4H2.3V6.2C2.3,6.2 2.2,4.8 3.7,4.8H6.1C6.1,4.8 7.4,4.8 7.4,3.5V1.3C7.4,1.3 7.6,0 5,0Z" fill="#3d9ad8"/><path d="M5,0C2.5,0 2.7,1.1 2.7,1.1V2.3H5.1V2.7H1.6C1.6,2.7 0,2.5 0,5C0,7.5 1.4,7.4 1.4,7.4H2.3V6.2C2.3,6.2 2.2,4.8 3.7,4.8H6.1C6.1,4.8 7.4,4.8 7.4,3.5V1.3C7.4,1.3 7.6,0 5,0Z" fill="#fbc916" transform="rotate(180 5 5)"/></g></g></svg>
<span id="t40" class="a t" style="left:80.4px;top:339.90px;font:400 13px/13px 'Liberation Sans',sans-serif;color:#000;letter-spacing:-0.929px;">__init__.py</span>
<svg class="a" style="left:64px;top:360px;" width="17" height="17" viewBox="0 0 17 17"><g transform="scale(1)"><path d="M1,5L5,1V5Z" fill="#aeb9c0"/><path d="M6,1H11V15H1V6H6Z" fill="#aeb9c0"/><g transform="translate(4.9,6.9) scale(0.93)"><g fill="#fff" stroke="#fff" stroke-width="1.7" opacity=".85"><path d="M5,0C2.5,0 2.7,1.1 2.7,1.1V2.3H5.1V2.7H1.6C1.6,2.7 0,2.5 0,5C0,7.5 1.4,7.4 1.4,7.4H2.3V6.2C2.3,6.2 2.2,4.8 3.7,4.8H6.1C6.1,4.8 7.4,4.8 7.4,3.5V1.3C7.4,1.3 7.6,0 5,0Z"/><path d="M5,0C2.5,0 2.7,1.1 2.7,1.1V2.3H5.1V2.7H1.6C1.6,2.7 0,2.5 0,5C0,7.5 1.4,7.4 1.4,7.4H2.3V6.2C2.3,6.2 2.2,4.8 3.7,4.8H6.1C6.1,4.8 7.4,4.8 7.4,3.5V1.3C7.4,1.3 7.6,0 5,0Z" transform="rotate(180 5 5)"/></g><path d="M5,0C2.5,0 2.7,1.1 2.7,1.1V2.3H5.1V2.7H1.6C1.6,2.7 0,2.5 0,5C0,7.5 1.4,7.4 1.4,7.4H2.3V6.2C2.3,6.2 2.2,4.8 3.7,4.8H6.1C6.1,4.8 7.4,4.8 7.4,3.5V1.3C7.4,1.3 7.6,0 5,0Z" fill="#3d9ad8"/><path d="M5,0C2.5,0 2.7,1.1 2.7,1.1V2.3H5.1V2.7H1.6C1.6,2.7 0,2.5 0,5C0,7.5 1.4,7.4 1.4,7.4H2.3V6.2C2.3,6.2 2.2,4.8 3.7,4.8H6.1C6.1,4.8 7.4,4.8 7.4,3.5V1.3C7.4,1.3 7.6,0 5,0Z" fill="#fbc916" transform="rotate(180 5 5)"/></g></g></svg>
<span id="t41" class="a t" style="left:80.4px;top:360.90px;font:400 13px/13px 'Liberation Sans',sans-serif;color:#000;letter-spacing:-0.016px;">settings.py</span>
<svg class="a" style="left:64px;top:381px;" width="17" height="17" viewBox="0 0 17 17"><g transform="scale(1)"><path d="M1,5L5,1V5Z" fill="#aeb9c0"/><path d="M6,1H11V15H1V6H6Z" fill="#aeb9c0"/><g transform="translate(4.9,6.9) scale(0.93)"><g fill="#fff" stroke="#fff" stroke-width="1.7" opacity=".85"><path d="M5,0C2.5,0 2.7,1.1 2.7,1.1V2.3H5.1V2.7H1.6C1.6,2.7 0,2.5 0,5C0,7.5 1.4,7.4 1.4,7.4H2.3V6.2C2.3,6.2 2.2,4.8 3.7,4.8H6.1C6.1,4.8 7.4,4.8 7.4,3.5V1.3C7.4,1.3 7.6,0 5,0Z"/><path d="M5,0C2.5,0 2.7,1.1 2.7,1.1V2.3H5.1V2.7H1.6C1.6,2.7 0,2.5 0,5C0,7.5 1.4,7.4 1.4,7.4H2.3V6.2C2.3,6.2 2.2,4.8 3.7,4.8H6.1C6.1,4.8 7.4,4.8 7.4,3.5V1.3C7.4,1.3 7.6,0 5,0Z" transform="rotate(180 5 5)"/></g><path d="M5,0C2.5,0 2.7,1.1 2.7,1.1V2.3H5.1V2.7H1.6C1.6,2.7 0,2.5 0,5C0,7.5 1.4,7.4 1.4,7.4H2.3V6.2C2.3,6.2 2.2,4.8 3.7,4.8H6.1C6.1,4.8 7.4,4.8 7.4,3.5V1.3C7.4,1.3 7.6,0 5,0Z" fill="#3d9ad8"/><path d="M5,0C2.5,0 2.7,1.1 2.7,1.1V2.3H5.1V2.7H1.6C1.6,2.7 0,2.5 0,5C0,7.5 1.4,7.4 1.4,7.4H2.3V6.2C2.3,6.2 2.2,4.8 3.7,4.8H6.1C6.1,4.8 7.4,4.8 7.4,3.5V1.3C7.4,1.3 7.6,0 5,0Z" fill="#fbc916" transform="rotate(180 5 5)"/></g></g></svg>
<span id="t42" class="a t" style="left:80.4px;top:381.90px;font:400 13px/13px 'Liberation Sans',sans-serif;color:#000;letter-spacing:-0.049px;">urls.py</span>
<svg class="a" style="left:64px;top:402px;" width="17" height="17" viewBox="0 0 17 17"><g transform="scale(1)"><path d="M1,5L5,1V5Z" fill="#aeb9c0"/><path d="M6,1H11V15H1V6H6Z" fill="#aeb9c0"/><g transform="translate(4.9,6.9) scale(0.93)"><g fill="#fff" stroke="#fff" stroke-width="1.7" opacity=".85"><path d="M5,0C2.5,0 2.7,1.1 2.7,1.1V2.3H5.1V2.7H1.6C1.6,2.7 0,2.5 0,5C0,7.5 1.4,7.4 1.4,7.4H2.3V6.2C2.3,6.2 2.2,4.8 3.7,4.8H6.1C6.1,4.8 7.4,4.8 7.4,3.5V1.3C7.4,1.3 7.6,0 5,0Z"/><path d="M5,0C2.5,0 2.7,1.1 2.7,1.1V2.3H5.1V2.7H1.6C1.6,2.7 0,2.5 0,5C0,7.5 1.4,7.4 1.4,7.4H2.3V6.2C2.3,6.2 2.2,4.8 3.7,4.8H6.1C6.1,4.8 7.4,4.8 7.4,3.5V1.3C7.4,1.3 7.6,0 5,0Z" transform="rotate(180 5 5)"/></g><path d="M5,0C2.5,0 2.7,1.1 2.7,1.1V2.3H5.1V2.7H1.6C1.6,2.7 0,2.5 0,5C0,7.5 1.4,7.4 1.4,7.4H2.3V6.2C2.3,6.2 2.2,4.8 3.7,4.8H6.1C6.1,4.8 7.4,4.8 7.4,3.5V1.3C7.4,1.3 7.6,0 5,0Z" fill="#3d9ad8"/><path d="M5,0C2.5,0 2.7,1.1 2.7,1.1V2.3H5.1V2.7H1.6C1.6,2.7 0,2.5 0,5C0,7.5 1.4,7.4 1.4,7.4H2.3V6.2C2.3,6.2 2.2,4.8 3.7,4.8H6.1C6.1,4.8 7.4,4.8 7.4,3.5V1.3C7.4,1.3 7.6,0 5,0Z" fill="#fbc916" transform="rotate(180 5 5)"/></g></g></svg>
<span id="t43" class="a t" style="left:80.4px;top:402.90px;font:400 13px/13px 'Liberation Sans',sans-serif;color:#000;letter-spacing:-0.060px;">wsgi.py</span>
<svg class="a" style="left:44px;top:423px;" width="17" height="17" viewBox="0 0 17 17"><path d="M1,5L5,1V5Z" fill="#aeb9c0"/><path d="M6,1H11V15H1V6H6Z" fill="#aeb9c0"/><path d="M3.5,7.5H9.5M3.5,9.7H9.5M3.5,11.9H7.5" stroke="#555" stroke-width="1.1"/></svg>
<span id="t44" class="a t" style="left:60.4px;top:423.90px;font:400 13px/13px 'Liberation Sans',sans-serif;color:#000;letter-spacing:0.094px;">db.sqlite3</span>
<svg class="a" style="left:44px;top:444px;" width="17" height="17" viewBox="0 0 17 17"><g transform="scale(1)"><path d="M1,5L5,1V5Z" fill="#aeb9c0"/><path d="M6,1H11V15H1V6H6Z" fill="#aeb9c0"/><g transform="translate(4.9,6.9) scale(0.93)"><g fill="#fff" stroke="#fff" stroke-width="1.7" opacity=".85"><path d="M5,0C2.5,0 2.7,1.1 2.7,1.1V2.3H5.1V2.7H1.6C1.6,2.7 0,2.5 0,5C0,7.5 1.4,7.4 1.4,7.4H2.3V6.2C2.3,6.2 2.2,4.8 3.7,4.8H6.1C6.1,4.8 7.4,4.8 7.4,3.5V1.3C7.4,1.3 7.6,0 5,0Z"/><path d="M5,0C2.5,0 2.7,1.1 2.7,1.1V2.3H5.1V2.7H1.6C1.6,2.7 0,2.5 0,5C0,7.5 1.4,7.4 1.4,7.4H2.3V6.2C2.3,6.2 2.2,4.8 3.7,4.8H6.1C6.1,4.8 7.4,4.8 7.4,3.5V1.3C7.4,1.3 7.6,0 5,0Z" transform="rotate(180 5 5)"/></g><path d="M5,0C2.5,0 2.7,1.1 2.7,1.1V2.3H5.1V2.7H1.6C1.6,2.7 0,2.5 0,5C0,7.5 1.4,7.4 1.4,7.4H2.3V6.2C2.3,6.2 2.2,4.8 3.7,4.8H6.1C6.1,4.8 7.4,4.8 7.4,3.5V1.3C7.4,1.3 7.6,0 5,0Z" fill="#3d9ad8"/><path d="M5,0C2.5,0 2.7,1.1 2.7,1.1V2.3H5.1V2.7H1.6C1.6,2.7 0,2.5 0,5C0,7.5 1.4,7.4 1.4,7.4H2.3V6.2C2.3,6.2 2.2,4.8 3.7,4.8H6.1C6.1,4.8 7.4,4.8 7.4,3.5V1.3C7.4,1.3 7.6,0 5,0Z" fill="#fbc916" transform="rotate(180 5 5)"/></g></g></svg>
<span id="t45" class="a t" style="left:60.4px;top:444.90px;font:400 13px/13px 'Liberation Sans',sans-serif;color:#000;letter-spacing:-0.104px;">manage.py</span>
<svg class="a" style="left:-1.3px;top:464.7px;" width="16" height="16" viewBox="0 0 16 16"><path d="M6,4L10,8L6,12" fill="none" stroke="#6e6e6e" stroke-width="1.8"/></svg>
<svg class="a" style="left:22px;top:464px;" width="18" height="18" viewBox="0 0 18 18"><rect x="1" y="2" width="10" height="8.6" fill="#aeb9c0"/><path d="M2.6,4L5.4,6.2L2.6,8.4" fill="none" stroke="#e8eef2" stroke-width="1"/><circle cx="11.2" cy="11.6" r="5.2" fill="#40b6e0" stroke="#fff" stroke-width="1"/><path d="M11.2,8.8V11.8L12.8,13.4" fill="none" stroke="#fff" stroke-width="1.2"/></svg>
<span id="t46" class="a t" style="left:40.4px;top:465.90px;font:400 13px/13px 'Liberation Sans',sans-serif;color:#000;letter-spacing:-0.139px;">Scratches and Consoles</span>
<svg class="a" style="left:-1.3px;top:485.7px;" width="16" height="16" viewBox="0 0 16 16"><path d="M6,4L10,8L6,12" fill="none" stroke="#6e6e6e" stroke-width="1.8"/></svg>
<svg class="a" style="left:22px;top:485px;" width="18" height="18" viewBox="0 0 18 18"><rect x="1" y="4.5" width="1.6" height="9.5" fill="#aeb9c0"/><rect x="4" y="4.5" width="2" height="9.5" fill="#62b543"/><rect x="7.2" y="2.5" width="1.6" height="11.5" fill="#aeb9c0"/><rect x="10" y="4.5" width="2" height="9.5" fill="#40b6e0"/><rect x="13.4" y="6.5" width="1.6" height="7.5" fill="#aeb9c0"/></svg>
<span class="a t" style="left:40.1px;top:487.2px;font:400 12px/13px 'Liberation Sans','Noto Sans CJK SC',sans-serif;color:#000;letter-spacing:-0.1px;">外部库</span>
</div>
<div class="a" style="left:30px;top:665.5px;width:128px;height:9.5px;background:#e2e2e2;"></div>
<div class="a" style="left:8px;top:675px;width:936px;height:1px;background:#9b9b9b;"></div>
<div class="a" style="left:203px;top:82px;width:720px;height:23px;background:#f2f2f2;"></div>
<div class="a" style="left:203px;top:105px;width:720px;height:1px;background:#9b9b9b;"></div>
<div class="a" style="left:203px;top:82px;width:95px;height:23px;background:#d4d4d4;"></div>
<div class="a" style="left:298px;top:82px;width:1px;height:23px;background:#9b9b9b;"></div>
<svg class="a" style="left:213.1px;top:87px;" width="17" height="17" viewBox="0 0 17 17"><g transform="scale(1)"><path d="M1,5L5,1V5Z" fill="#aeb9c0"/><path d="M6,1H11V15H1V6H6Z" fill="#aeb9c0"/><g transform="translate(4.9,6.9) scale(0.93)"><g fill="#fff" stroke="#fff" stroke-width="1.7" opacity=".85"><path d="M5,0C2.5,0 2.7,1.1 2.7,1.1V2.3H5.1V2.7H1.6C1.6,2.7 0,2.5 0,5C0,7.5 1.4,7.4 1.4,7.4H2.3V6.2C2.3,6.2 2.2,4.8 3.7,4.8H6.1C6.1,4.8 7.4,4.8 7.4,3.5V1.3C7.4,1.3 7.6,0 5,0Z"/><path d="M5,0C2.5,0 2.7,1.1 2.7,1.1V2.3H5.1V2.7H1.6C1.6,2.7 0,2.5 0,5C0,7.5 1.4,7.4 1.4,7.4H2.3V6.2C2.3,6.2 2.2,4.8 3.7,4.8H6.1C6.1,4.8 7.4,4.8 7.4,3.5V1.3C7.4,1.3 7.6,0 5,0Z" transform="rotate(180 5 5)"/></g><path d="M5,0C2.5,0 2.7,1.1 2.7,1.1V2.3H5.1V2.7H1.6C1.6,2.7 0,2.5 0,5C0,7.5 1.4,7.4 1.4,7.4H2.3V6.2C2.3,6.2 2.2,4.8 3.7,4.8H6.1C6.1,4.8 7.4,4.8 7.4,3.5V1.3C7.4,1.3 7.6,0 5,0Z" fill="#3d9ad8"/><path d="M5,0C2.5,0 2.7,1.1 2.7,1.1V2.3H5.1V2.7H1.6C1.6,2.7 0,2.5 0,5C0,7.5 1.4,7.4 1.4,7.4H2.3V6.2C2.3,6.2 2.2,4.8 3.7,4.8H6.1C6.1,4.8 7.4,4.8 7.4,3.5V1.3C7.4,1.3 7.6,0 5,0Z" fill="#fbc916" transform="rotate(180 5 5)"/></g></g></svg>
<span id="t47" class="a t" style="left:228.6px;top:88.00px;font:400 13px/13px 'Liberation Sans',sans-serif;color:#000;letter-spacing:-0.166px;">views.py</span>
<svg class="a" style="left:282.4px;top:89.5px;" width="9" height="9" viewBox="0 0 9 9"><path d="M0.6,0.6L7.8,7.8M7.8,0.6L0.6,7.8" stroke="#a8a8a8" stroke-width="1.2" fill="none"/></svg>
<div class="a" style="left:299px;top:82px;width:104px;height:28px;background:#ffffff;"></div>
<div class="a" style="left:403px;top:82px;width:1px;height:23px;background:#9b9b9b;"></div>
<svg class="a" style="left:307px;top:87px;" width="17" height="17" viewBox="0 0 17 17"><path d="M3,5L7,1V5Z" fill="#aeb9c0"/><path d="M8,1H13V8H3V6H8Z" fill="#aeb9c0"/><rect x="1" y="9" width="15" height="7" fill="#8fcc7a"/><path d="M3.6,10.2V15M6.4,10.2V15M3.6,12.6H6.4" stroke="#3b5a34" stroke-width="1.1" fill="none"/></svg>
<span id="t48" class="a t" style="left:325px;top:88.00px;font:400 13px/13px 'Liberation Sans',sans-serif;color:#000;letter-spacing:0.095px;">login.html</span>
<svg class="a" style="left:387.6px;top:89.5px;" width="9" height="9" viewBox="0 0 9 9"><path d="M0.6,0.6L7.8,7.8M7.8,0.6L0.6,7.8" stroke="#a8a8a8" stroke-width="1.2" fill="none"/></svg>
<div class="a" style="left:404px;top:82px;width:119.5px;height:23px;background:#d4d4d4;"></div>
<div class="a" style="left:523.5px;top:82px;width:1px;height:23px;background:#9b9b9b;"></div>
<svg class="a" style="left:412.1px;top:87px;" width="17" height="17" viewBox="0 0 17 17"><path d="M3,5L7,1V5Z" fill="#aeb9c0"/><path d="M8,1H13V8H3V6H8Z" fill="#aeb9c0"/><rect x="1" y="9" width="15" height="7" fill="#8fcc7a"/><path d="M3.6,10.2V15M6.4,10.2V15M3.6,12.6H6.4" stroke="#3b5a34" stroke-width="1.1" fill="none"/></svg>
<span id="t49" class="a t" style="left:430.5px;top:88.00px;font:400 13px/13px 'Liberation Sans',sans-serif;color:#000;letter-spacing:0.141px;">register.html</span>
<svg class="a" style="left:508.5px;top:89.5px;" width="9" height="9" viewBox="0 0 9 9"><path d="M0.6,0.6L7.8,7.8M7.8,0.6L0.6,7.8" stroke="#a8a8a8" stroke-width="1.2" fill="none"/></svg>
<div class="a" style="left:524.5px;top:82px;width:107.5px;height:23px;background:#d4d4d4;"></div>
<div class="a" style="left:632px;top:82px;width:1px;height:23px;background:#9b9b9b;"></div>
<svg class="a" style="left:535.1px;top:87px;" width="17" height="17" viewBox="0 0 17 17"><g transform="scale(1)"><path d="M1,5L5,1V5Z" fill="#aeb9c0"/><path d="M6,1H11V15H1V6H6Z" fill="#aeb9c0"/><g transform="translate(4.9,6.9) scale(0.93)"><g fill="#fff" stroke="#fff" stroke-width="1.7" opacity=".85"><path d="M5,0C2.5,0 2.7,1.1 2.7,1.1V2.3H5.1V2.7H1.6C1.6,2.7 0,2.5 0,5C0,7.5 1.4,7.4 1.4,7.4H2.3V6.2C2.3,6.2 2.2,4.8 3.7,4.8H6.1C6.1,4.8 7.4,4.8 7.4,3.5V1.3C7.4,1.3 7.6,0 5,0Z"/><path d="M5,0C2.5,0 2.7,1.1 2.7,1.1V2.3H5.1V2.7H1.6C1.6,2.7 0,2.5 0,5C0,7.5 1.4,7.4 1.4,7.4H2.3V6.2C2.3,6.2 2.2,4.8 3.7,4.8H6.1C6.1,4.8 7.4,4.8 7.4,3.5V1.3C7.4,1.3 7.6,0 5,0Z" transform="rotate(180 5 5)"/></g><path d="M5,0C2.5,0 2.7,1.1 2.7,1.1V2.3H5.1V2.7H1.6C1.6,2.7 0,2.5 0,5C0,7.5 1.4,7.4 1.4,7.4H2.3V6.2C2.3,6.2 2.2,4.8 3.7,4.8H6.1C6.1,4.8 7.4,4.8 7.4,3.5V1.3C7.4,1.3 7.6,0 5,0Z" fill="#3d9ad8"/><path d="M5,0C2.5,0 2.7,1.1 2.7,1.1V2.3H5.1V2.7H1.6C1.6,2.7 0,2.5 0,5C0,7.5 1.4,7.4 1.4,7.4H2.3V6.2C2.3,6.2 2.2,4.8 3.7,4.8H6.1C6.1,4.8 7.4,4.8 7.4,3.5V1.3C7.4,1.3 7.6,0 5,0Z" fill="#fbc916" transform="rotate(180 5 5)"/></g></g></svg>
<span id="t50" class="a t" style="left:551.5px;top:88.00px;font:400 13px/13px 'Liberation Sans',sans-serif;color:#000;letter-spacing:-0.006px;">models.py</span>
<svg class="a" style="left:616.6px;top:89.5px;" width="9" height="9" viewBox="0 0 9 9"><path d="M0.6,0.6L7.8,7.8M7.8,0.6L0.6,7.8" stroke="#a8a8a8" stroke-width="1.2" fill="none"/></svg>
<div class="a" style="left:633px;top:82px;width:85px;height:23px;background:#d4d4d4;"></div>
<div class="a" style="left:718px;top:82px;width:1px;height:23px;background:#9b9b9b;"></div>
<svg class="a" style="left:643.1px;top:87px;" width="17" height="17" viewBox="0 0 17 17"><g transform="scale(1)"><path d="M1,5L5,1V5Z" fill="#aeb9c0"/><path d="M6,1H11V15H1V6H6Z" fill="#aeb9c0"/><g transform="translate(4.9,6.9) scale(0.93)"><g fill="#fff" stroke="#fff" stroke-width="1.7" opacity=".85"><path d="M5,0C2.5,0 2.7,1.1 2.7,1.1V2.3H5.1V2.7H1.6C1.6,2.7 0,2.5 0,5C0,7.5 1.4,7.4 1.4,7.4H2.3V6.2C2.3,6.2 2.2,4.8 3.7,4.8H6.1C6.1,4.8 7.4,4.8 7.4,3.5V1.3C7.4,1.3 7.6,0 5,0Z"/><path d="M5,0C2.5,0 2.7,1.1 2.7,1.1V2.3H5.1V2.7H1.6C1.6,2.7 0,2.5 0,5C0,7.5 1.4,7.4 1.4,7.4H2.3V6.2C2.3,6.2 2.2,4.8 3.7,4.8H6.1C6.1,4.8 7.4,4.8 7.4,3.5V1.3C7.4,1.3 7.6,0 5,0Z" transform="rotate(180 5 5)"/></g><path d="M5,0C2.5,0 2.7,1.1 2.7,1.1V2.3H5.1V2.7H1.6C1.6,2.7 0,2.5 0,5C0,7.5 1.4,7.4 1.4,7.4H2.3V6.2C2.3,6.2 2.2,4.8 3.7,4.8H6.1C6.1,4.8 7.4,4.8 7.4,3.5V1.3C7.4,1.3 7.6,0 5,0Z" fill="#3d9ad8"/><path d="M5,0C2.5,0 2.7,1.1 2.7,1.1V2.3H5.1V2.7H1.6C1.6,2.7 0,2.5 0,5C0,7.5 1.4,7.4 1.4,7.4H2.3V6.2C2.3,6.2 2.2,4.8 3.7,4.8H6.1C6.1,4.8 7.4,4.8 7.4,3.5V1.3C7.4,1.3 7.6,0 5,0Z" fill="#fbc916" transform="rotate(180 5 5)"/></g></g></svg>
<span id="t51" class="a t" style="left:659.3px;top:88.00px;font:400 13px/13px 'Liberation Sans',sans-serif;color:#000;letter-spacing:-0.033px;">urls.py</span>
<svg class="a" style="left:702.6px;top:89.5px;" width="9" height="9" viewBox="0 0 9 9"><path d="M0.6,0.6L7.8,7.8M7.8,0.6L0.6,7.8" stroke="#a8a8a8" stroke-width="1.2" fill="none"/></svg>
<div class="a" style="left:203px;top:106px;width:720px;height:3px;background:#ffffff;"></div>
<div class="a" style="left:203px;top:109px;width:720px;height:1px;background:#9b9b9b;"></div>
<div class="a" style="left:203px;top:110px;width:62px;height:565px;background:#f0f0f0;"></div>
<div class="a" style="left:265px;top:110px;width:1px;height:565px;background:#d4d4d4;"></div>
<div class="a" style="left:266px;top:110px;width:657px;height:565px;background:#ffffff;"></div>
<div class="a" style="left:923px;top:82px;width:1px;height:593px;background:#ababab;"></div>
<div class="a" style="left:203px;top:450px;width:720px;height:20px;background:#fffae3;"></div>
<div class="a" style="left:265px;top:450px;width:1px;height:20px;background:#d4d4d4;"></div>
<div class="a" style="left:272px;top:450px;width:2px;height:20px;background:#000;"></div>
<div class="a" style="left:310px;top:270px;width:1px;height:120px;background:#dedede;"></div>
<div class="a" style="left:346px;top:290px;width:1px;height:80px;background:#dedede;"></div>
<div class="a" style="left:272px;top:110px;width:135px;height:20px;background:#efefef;"></div>
<span class="a t c" style="left:272px;top:112.1px;color:#000">&lt;!DOCTYPE </span>
<span class="a t cb" style="left:362px;top:112.1px;color:#0000ff">html</span>
<span class="a t c" style="left:398px;top:112.1px;color:#000">&gt;</span>
<div class="a" style="left:272px;top:130px;width:144px;height:20px;background:#efefef;"></div>
<span class="a t c" style="left:272px;top:132.1px;color:#000">&lt;</span>
<span class="a t cb" style="left:281px;top:132.1px;color:#000080">html</span>
<span class="a t cb" style="left:317px;top:132.1px;color:#0000ff"> lang=</span>
<span class="a t cb" style="left:371px;top:132.1px;color:#008000">"en"</span>
<span class="a t c" style="left:407px;top:132.1px;color:#000">&gt;</span>
<div class="a" style="left:272px;top:150px;width:54px;height:20px;background:#efefef;"></div>
<span class="a t c" style="left:272px;top:152.1px;color:#000">&lt;</span>
<span class="a t cb" style="left:281px;top:152.1px;color:#000080">head</span>
<span class="a t c" style="left:317px;top:152.1px;color:#000">&gt;</span>
<div class="a" style="left:308px;top:170px;width:198px;height:20px;background:#efefef;"></div>
<span class="a t c" style="left:308px;top:172.1px;color:#000">&lt;</span>
<span class="a t cb" style="left:317px;top:172.1px;color:#000080">meta</span>
<span class="a t cb" style="left:353px;top:172.1px;color:#0000ff"> charset=</span>
<span class="a t cb" style="left:434px;top:172.1px;color:#008000">"UTF-8"</span>
<span class="a t c" style="left:497px;top:172.1px;color:#000">&gt;</span>
<div class="a" style="left:308px;top:190px;width:63px;height:20px;background:#efefef;"></div>
<div class="a" style="left:405px;top:190px;width:72px;height:20px;background:#efefef;"></div>
<span class="a t c" style="left:308px;top:192.1px;color:#000">&lt;</span>
<span class="a t cb" style="left:317px;top:192.1px;color:#000080">title</span>
<span class="a t c" style="left:362px;top:192.1px;color:#000">&gt;</span>
<span class="a t" style="left:371.1px;top:192.2px;font:400 16.8px/18px 'Liberation Mono','Noto Serif CJK SC',monospace;color:#000;letter-spacing:0.2px;">登陆</span>
<span class="a t c" style="left:405px;top:192.1px;color:#000">&lt;/</span>
<span class="a t cb" style="left:423px;top:192.1px;color:#000080">title</span>
<span class="a t c" style="left:468px;top:192.1px;color:#000">&gt;</span>
<div class="a" style="left:272px;top:210px;width:63px;height:20px;background:#efefef;"></div>
<span class="a t c" style="left:272px;top:212.1px;color:#000">&lt;/</span>
<span class="a t cb" style="left:290px;top:212.1px;color:#000080">head</span>
<span class="a t c" style="left:326px;top:212.1px;color:#000">&gt;</span>
<div class="a" style="left:272px;top:230px;width:54px;height:20px;background:#efefef;"></div>
<span class="a t c" style="left:272px;top:232.1px;color:#000">&lt;</span>
<span class="a t cb" style="left:281px;top:232.1px;color:#000080">body</span>
<span class="a t c" style="left:317px;top:232.1px;color:#000">&gt;</span>
<div class="a" style="left:308px;top:250px;width:45px;height:20px;background:#efefef;"></div>
<span class="a t c" style="left:308px;top:252.1px;color:#000">&lt;</span>
<span class="a t cb" style="left:317px;top:252.1px;color:#000080">div</span>
<span class="a t c" style="left:344px;top:252.1px;color:#000">&gt;</span>
<div class="a" style="left:344px;top:270px;width:270px;height:20px;background:#efefef;"></div>
<span class="a t c" style="left:344px;top:272.1px;color:#000">&lt;</span>
<span class="a t cb" style="left:353px;top:272.1px;color:#000080">form</span>
<span class="a t cb" style="left:389px;top:272.1px;color:#0000ff"> action=</span>
<span class="a t cb" style="left:461px;top:272.1px;color:#008000">""</span>
<span class="a t cb" style="left:479px;top:272.1px;color:#0000ff"> method=</span>
<span class="a t cb" style="left:551px;top:272.1px;color:#008000">"post"</span>
<span class="a t c" style="left:605px;top:272.1px;color:#000">&gt;</span>
<div class="a" style="left:380px;top:290px;width:27px;height:20px;background:#efefef;"></div>
<div class="a" style="left:467px;top:290px;width:9px;height:20px;background:#efefef;"></div>
<div class="a" style="left:476px;top:290px;width:45px;height:20px;background:#f6ebbc;"></div>
<div class="a" style="left:521px;top:290px;width:261px;height:20px;background:#efefef;"></div>
<span class="a t c" style="left:380px;top:292.1px;color:#000">&lt;</span>
<span class="a t cb" style="left:389px;top:292.1px;color:#000080">p</span>
<span class="a t c" style="left:398px;top:292.1px;color:#000">&gt;</span>
<span class="a t" style="left:407.1px;top:292.2px;font:400 16.8px/18px 'Liberation Mono','Noto Serif CJK SC',monospace;color:#000;letter-spacing:0.2px;">用户名</span>
<span class="a t c" style="left:458px;top:292.1px;color:#000">:</span>
<span class="a t c" style="left:467px;top:292.1px;color:#000">&lt;</span>
<span class="a t cb" style="left:476px;top:292.1px;color:#000080">input</span>
<span class="a t cb" style="left:521px;top:292.1px;color:#0000ff"> type=</span>
<span class="a t cb" style="left:575px;top:292.1px;color:#008000">"text"</span>
<span class="a t cb" style="left:629px;top:292.1px;color:#0000ff"> name=</span>
<span class="a t cb" style="left:683px;top:292.1px;color:#008000">"name"</span>
<span class="a t c" style="left:737px;top:292.1px;color:#000">&gt;</span>
<span class="a t c" style="left:746px;top:292.1px;color:#000">&lt;/</span>
<span class="a t cb" style="left:764px;top:292.1px;color:#000080">p</span>
<span class="a t c" style="left:773px;top:292.1px;color:#000">&gt;</span>
<div class="a" style="left:380px;top:310px;width:27px;height:20px;background:#efefef;"></div>
<div class="a" style="left:450px;top:310px;width:9px;height:20px;background:#efefef;"></div>
<div class="a" style="left:459px;top:310px;width:45px;height:20px;background:#f6ebbc;"></div>
<div class="a" style="left:504px;top:310px;width:252px;height:20px;background:#efefef;"></div>
<span class="a t c" style="left:380px;top:312.1px;color:#000">&lt;</span>
<span class="a t cb" style="left:389px;top:312.1px;color:#000080">p</span>
<span class="a t c" style="left:398px;top:312.1px;color:#000">&gt;</span>
<span class="a t" style="left:407.1px;top:312.2px;font:400 16.8px/18px 'Liberation Mono','Noto Serif CJK SC',monospace;color:#000;letter-spacing:0.2px;">密码</span>
<span class="a t c" style="left:441px;top:312.1px;color:#000">:</span>
<span class="a t c" style="left:450px;top:312.1px;color:#000">&lt;</span>
<span class="a t cb" style="left:459px;top:312.1px;color:#000080">input</span>
<span class="a t cb" style="left:504px;top:312.1px;color:#0000ff"> type=</span>
<span class="a t cb" style="left:558px;top:312.1px;color:#008000">"text"</span>
<span class="a t cb" style="left:612px;top:312.1px;color:#0000ff"> name=</span>
<span class="a t cb" style="left:666px;top:312.1px;color:#008000">"pwd"</span>
<span class="a t c" style="left:711px;top:312.1px;color:#000">&gt;</span>
<span class="a t c" style="left:720px;top:312.1px;color:#000">&lt;/</span>
<span class="a t cb" style="left:738px;top:312.1px;color:#000080">p</span>
<span class="a t c" style="left:747px;top:312.1px;color:#000">&gt;</span>
<div class="a" style="left:380px;top:330px;width:367px;height:20px;background:#efefef;"></div>
<span class="a t c" style="left:380px;top:332.1px;color:#000">&lt;</span>
<span class="a t cb" style="left:389px;top:332.1px;color:#000080">p</span>
<span class="a t c" style="left:398px;top:332.1px;color:#000">&gt;</span>
<span class="a t c" style="left:407px;top:332.1px;color:#000">&lt;</span>
<span class="a t cb" style="left:416px;top:332.1px;color:#000080">input</span>
<span class="a t cb" style="left:461px;top:332.1px;color:#0000ff"> type=</span>
<span class="a t cb" style="left:515px;top:332.1px;color:#008000">"submit"</span>
<span class="a t cb" style="left:587px;top:332.1px;color:#0000ff"> value=</span>
<span class="a t cb" style="left:650px;top:332.1px;color:#008000">"</span>
<span class="a t" style="left:659.1px;top:332.2px;font:700 16.8px/18px 'Liberation Mono','Noto Serif CJK SC',monospace;color:#008000;letter-spacing:0.2px;">登陆</span>
<span class="a t cb" style="left:693px;top:332.1px;color:#008000">"</span>
<span class="a t c" style="left:702px;top:332.1px;color:#000">&gt;</span>
<span class="a t c" style="left:711px;top:332.1px;color:#000">&lt;/</span>
<span class="a t cb" style="left:729px;top:332.1px;color:#000080">p</span>
<span class="a t c" style="left:738px;top:332.1px;color:#000">&gt;</span>
<span class="a t c" style="left:380px;top:352.1px;color:#000">{{ </span>
<span class="a t cb" style="left:407px;top:352.1px;color:#0000ff">msg</span>
<span class="a t c" style="left:434px;top:352.1px;color:#000"> }}</span>
<div class="a" style="left:344px;top:370px;width:63px;height:20px;background:#efefef;"></div>
<span class="a t c" style="left:344px;top:372.1px;color:#000">&lt;/</span>
<span class="a t cb" style="left:362px;top:372.1px;color:#000080">form</span>
<span class="a t c" style="left:398px;top:372.1px;color:#000">&gt;</span>
<div class="a" style="left:308px;top:390px;width:54px;height:20px;background:#efefef;"></div>
<span class="a t c" style="left:308px;top:392.1px;color:#000">&lt;/</span>
<span class="a t cb" style="left:326px;top:392.1px;color:#000080">div</span>
<span class="a t c" style="left:353px;top:392.1px;color:#000">&gt;</span>
<div class="a" style="left:272px;top:410px;width:63px;height:20px;background:#efefef;"></div>
<span class="a t c" style="left:272px;top:412.1px;color:#000">&lt;/</span>
<span class="a t cb" style="left:290px;top:412.1px;color:#000080">body</span>
<span class="a t c" style="left:326px;top:412.1px;color:#000">&gt;</span>
<div class="a" style="left:272px;top:430px;width:63px;height:20px;background:#efefef;"></div>
<span class="a t c" style="left:272px;top:432.1px;color:#000">&lt;/</span>
<span class="a t cb" style="left:290px;top:432.1px;color:#000080">html</span>
<span class="a t c" style="left:326px;top:432.1px;color:#000">&gt;</span>
<span id="t52" class="a t" style="left:203px;top:113.28px;font:400 15.5px/15.5px 'Liberation Sans',sans-serif;color:#999;width:21px;text-align:right;transform:scaleX(.9);transform-origin:100% 50%;">1</span>
<span id="t53" class="a t" style="left:203px;top:133.28px;font:400 15.5px/15.5px 'Liberation Sans',sans-serif;color:#999;width:21px;text-align:right;transform:scaleX(.9);transform-origin:100% 50%;">2</span>
<span id="t54" class="a t" style="left:203px;top:153.28px;font:400 15.5px/15.5px 'Liberation Sans',sans-serif;color:#999;width:21px;text-align:right;transform:scaleX(.9);transform-origin:100% 50%;">3</span>
<span id="t55" class="a t" style="left:203px;top:173.28px;font:400 15.5px/15.5px 'Liberation Sans',sans-serif;color:#999;width:21px;text-align:right;transform:scaleX(.9);transform-origin:100% 50%;">4</span>
<span id="t56" class="a t" style="left:203px;top:193.28px;font:400 15.5px/15.5px 'Liberation Sans',sans-serif;color:#999;width:21px;text-align:right;transform:scaleX(.9);transform-origin:100% 50%;">5</span>
<span id="t57" class="a t" style="left:203px;top:213.28px;font:400 15.5px/15.5px 'Liberation Sans',sans-serif;color:#999;width:21px;text-align:right;transform:scaleX(.9);transform-origin:100% 50%;">6</span>
<span id="t58" class="a t" style="left:203px;top:233.28px;font:400 15.5px/15.5px 'Liberation Sans',sans-serif;color:#999;width:21px;text-align:right;transform:scaleX(.9);transform-origin:100% 50%;">7</span>
<span id="t59" class="a t" style="left:203px;top:253.28px;font:400 15.5px/15.5px 'Liberation Sans',sans-serif;color:#999;width:21px;text-align:right;transform:scaleX(.9);transform-origin:100% 50%;">8</span>
<span id="t60" class="a t" style="left:203px;top:273.28px;font:400 15.5px/15.5px 'Liberation Sans',sans-serif;color:#999;width:21px;text-align:right;transform:scaleX(.9);transform-origin:100% 50%;">9</span>
<span id="t61" class="a t" style="left:203px;top:293.28px;font:400 15.5px/15.5px 'Liberation Sans',sans-serif;color:#999;width:21px;text-align:right;transform:scaleX(.9);transform-origin:100% 50%;">10</span>
<span id="t62" class="a t" style="left:203px;top:313.28px;font:400 15.5px/15.5px 'Liberation Sans',sans-serif;color:#999;width:21px;text-align:right;transform:scaleX(.9);transform-origin:100% 50%;">11</span>
<span id="t63" class="a t" style="left:203px;top:333.28px;font:400 15.5px/15.5px 'Liberation Sans',sans-serif;color:#999;width:21px;text-align:right;transform:scaleX(.9);transform-origin:100% 50%;">12</span>
<span id="t64" class="a t" style="left:203px;top:353.28px;font:400 15.5px/15.5px 'Liberation Sans',sans-serif;color:#999;width:21px;text-align:right;transform:scaleX(.9);transform-origin:100% 50%;">13</span>
<span id="t65" class="a t" style="left:203px;top:373.28px;font:400 15.5px/15.5px 'Liberation Sans',sans-serif;color:#999;width:21px;text-align:right;transform:scaleX(.9);transform-origin:100% 50%;">14</span>
<span id="t66" class="a t" style="left:203px;top:393.28px;font:400 15.5px/15.5px 'Liberation Sans',sans-serif;color:#999;width:21px;text-align:right;transform:scaleX(.9);transform-origin:100% 50%;">15</span>
<span id="t67" class="a t" style="left:203px;top:413.28px;font:400 15.5px/15.5px 'Liberation Sans',sans-serif;color:#999;width:21px;text-align:right;transform:scaleX(.9);transform-origin:100% 50%;">16</span>
<span id="t68" class="a t" style="left:203px;top:433.28px;font:400 15.5px/15.5px 'Liberation Sans',sans-serif;color:#999;width:21px;text-align:right;transform:scaleX(.9);transform-origin:100% 50%;">17</span>
<span id="t69" class="a t" style="left:203px;top:453.28px;font:400 15.5px/15.5px 'Liberation Sans',sans-serif;color:#999;width:21px;text-align:right;transform:scaleX(.9);transform-origin:100% 50%;">18</span>
<svg class="a" style="left:232.8px;top:110px;" width="20.4" height="20.4" viewBox="0 0 20.4 20.4"><g transform="scale(1.2)"><path d="M1,5L5,1V5Z" fill="#aeb9c0"/><path d="M6,1H11V15H1V6H6Z" fill="#aeb9c0"/><g transform="translate(4.9,6.9) scale(0.93)"><g fill="#fff" stroke="#fff" stroke-width="1.7" opacity=".85"><path d="M5,0C2.5,0 2.7,1.1 2.7,1.1V2.3H5.1V2.7H1.6C1.6,2.7 0,2.5 0,5C0,7.5 1.4,7.4 1.4,7.4H2.3V6.2C2.3,6.2 2.2,4.8 3.7,4.8H6.1C6.1,4.8 7.4,4.8 7.4,3.5V1.3C7.4,1.3 7.6,0 5,0Z"/><path d="M5,0C2.5,0 2.7,1.1 2.7,1.1V2.3H5.1V2.7H1.6C1.6,2.7 0,2.5 0,5C0,7.5 1.4,7.4 1.4,7.4H2.3V6.2C2.3,6.2 2.2,4.8 3.7,4.8H6.1C6.1,4.8 7.4,4.8 7.4,3.5V1.3C7.4,1.3 7.6,0 5,0Z" transform="rotate(180 5 5)"/></g><path d="M5,0C2.5,0 2.7,1.1 2.7,1.1V2.3H5.1V2.7H1.6C1.6,2.7 0,2.5 0,5C0,7.5 1.4,7.4 1.4,7.4H2.3V6.2C2.3,6.2 2.2,4.8 3.7,4.8H6.1C6.1,4.8 7.4,4.8 7.4,3.5V1.3C7.4,1.3 7.6,0 5,0Z" fill="#3d9ad8"/><path d="M5,0C2.5,0 2.7,1.1 2.7,1.1V2.3H5.1V2.7H1.6C1.6,2.7 0,2.5 0,5C0,7.5 1.4,7.4 1.4,7.4H2.3V6.2C2.3,6.2 2.2,4.8 3.7,4.8H6.1C6.1,4.8 7.4,4.8 7.4,3.5V1.3C7.4,1.3 7.6,0 5,0Z" fill="#fbc916" transform="rotate(180 5 5)"/></g></g></svg>
<svg class="a" style="left:260px;top:137px;" width="11" height="13" viewBox="0 0 11 13"><path d="M0.5,0.5H10.5V8L5.5,12L0.5,8Z" fill="#fff" stroke="#c2c2c2" stroke-width="1"/><path d="M3,5.2H8" stroke="#a0a0a0" stroke-width="1"/></svg>
<svg class="a" style="left:260px;top:157px;" width="11" height="13" viewBox="0 0 11 13"><path d="M0.5,0.5H10.5V8L5.5,12L0.5,8Z" fill="#fff" stroke="#c2c2c2" stroke-width="1"/><path d="M3,5.2H8" stroke="#a0a0a0" stroke-width="1"/></svg>
<svg class="a" style="left:260px;top:237px;" width="11" height="13" viewBox="0 0 11 13"><path d="M0.5,0.5H10.5V8L5.5,12L0.5,8Z" fill="#fff" stroke="#c2c2c2" stroke-width="1"/><path d="M3,5.2H8" stroke="#a0a0a0" stroke-width="1"/></svg>
<svg class="a" style="left:260px;top:257px;" width="11" height="13" viewBox="0 0 11 13"><path d="M0.5,0.5H10.5V8L5.5,12L0.5,8Z" fill="#fff" stroke="#c2c2c2" stroke-width="1"/><path d="M3,5.2H8" stroke="#a0a0a0" stroke-width="1"/></svg>
<svg class="a" style="left:260px;top:277px;" width="11" height="13" viewBox="0 0 11 13"><path d="M0.5,0.5H10.5V8L5.5,12L0.5,8Z" fill="#fff" stroke="#c2c2c2" stroke-width="1"/><path d="M3,5.2H8" stroke="#a0a0a0" stroke-width="1"/></svg>
<svg class="a" style="left:260px;top:215px;" width="11" height="13" viewBox="0 0 11 13"><path d="M0.5,12.5H10.5V4.6L5.5,0.6L0.5,4.6Z" fill="#fff" stroke="#c2c2c2" stroke-width="1"/><path d="M3,7.6H8" stroke="#a0a0a0" stroke-width="1"/></svg>
<svg class="a" style="left:260px;top:375px;" width="11" height="13" viewBox="0 0 11 13"><path d="M0.5,12.5H10.5V4.6L5.5,0.6L0.5,4.6Z" fill="#fff" stroke="#c2c2c2" stroke-width="1"/><path d="M3,7.6H8" stroke="#a0a0a0" stroke-width="1"/></svg>
<svg class="a" style="left:260px;top:395px;" width="11" height="13" viewBox="0 0 11 13"><path d="M0.5,12.5H10.5V4.6L5.5,0.6L0.5,4.6Z" fill="#fff" stroke="#c2c2c2" stroke-width="1"/><path d="M3,7.6H8" stroke="#a0a0a0" stroke-width="1"/></svg>
<svg class="a" style="left:260px;top:415px;" width="11" height="13" viewBox="0 0 11 13"><path d="M0.5,12.5H10.5V4.6L5.5,0.6L0.5,4.6Z" fill="#fff" stroke="#c2c2c2" stroke-width="1"/><path d="M3,7.6H8" stroke="#a0a0a0" stroke-width="1"/></svg>
<svg class="a" style="left:260px;top:435px;" width="11" height="13" viewBox="0 0 11 13"><path d="M0.5,12.5H10.5V4.6L5.5,0.6L0.5,4.6Z" fill="#fff" stroke="#c2c2c2" stroke-width="1"/><path d="M3,7.6H8" stroke="#a0a0a0" stroke-width="1"/></svg>
<svg class="a" style="left:908px;top:111px;" width="14" height="12" viewBox="0 0 14 12"><path d="M0.8,6C2.6,2.8 4.8,1.6 7,1.6S11.4,2.8 13.2,6C11.4,9.2 9.2,10.4 7,10.4S2.6,9.2 0.8,6Z" fill="#8c8c8c"/><circle cx="7" cy="6" r="2.9" fill="#fff"/><circle cx="7" cy="6" r="1.7" fill="#8c8c8c"/></svg>
<div class="a" style="left:909px;top:305.5px;width:14px;height:2px;background:#ebc700;"></div>
<div class="a" style="left:909px;top:325.5px;width:14px;height:2px;background:#ebc700;"></div>
<div class="a" style="left:924px;top:81.5px;width:20px;height:594px;background:#f2f2f2;"></div>
<svg class="a" style="left:927.5px;top:93.5px;" width="12" height="10" viewBox="0 0 12 10"><g fill="#6e6e6e"><rect x="0.5" y="0.5" width="2.6" height="2.3"/><rect x="4.5" y="0.5" width="2.6" height="2.3"/><rect x="8.5" y="0.5" width="2.6" height="2.3"/><rect x="0.5" y="3.8" width="2.6" height="2.3"/><rect x="4.5" y="3.8" width="2.6" height="2.3"/><rect x="8.5" y="3.8" width="2.6" height="2.3"/><rect x="0.5" y="7.1" width="2.6" height="2.3"/><rect x="4.5" y="7.1" width="2.6" height="2.3"/><rect x="8.5" y="7.1" width="2.6" height="2.3"/></g></svg>
<div class="a" style="left:932.6px;top:129.8px;width:0;height:0"><span id="t70" class="a t" style="left:-29.35px;top:-6px;width:58.7px;text-align:center;font:400 12px/12px 'Liberation Sans',sans-serif;color:#000;letter-spacing:-0.628px;transform:rotate(90deg);transform-origin:50% 50%">SciView</span></div>
<svg class="a" style="left:927.5px;top:168.5px;" width="12" height="13" viewBox="0 0 12 13"><g fill="#6e6e6e"><ellipse cx="6" cy="2.6" rx="5.4" ry="2.3"/><path d="M0.6,4.2C2,6.2 10,6.2 11.4,4.2V6.6C10,8.6 2,8.6 0.6,6.6Z"/><path d="M0.6,7.8C2,9.8 10,9.8 11.4,7.8V10.2C10,12.4 2,12.4 0.6,10.2Z"/></g></svg>
<div class="a" style="left:932.6px;top:210.9px;width:0;height:0"><span id="t71" class="a t" style="left:-33.4px;top:-6px;width:66.8px;text-align:center;font:400 12px/12px 'Liberation Sans',sans-serif;color:#000;letter-spacing:-0.654px;transform:rotate(90deg);transform-origin:50% 50%">Database</span></div>
<div class="a" style="left:8px;top:676px;width:936px;height:21px;background:#f2f2f2;"></div>
<div class="a" style="left:8px;top:697px;width:936px;height:1px;background:#9b9b9b;"></div>
<svg class="a" style="left:41px;top:682.5px;" width="12" height="10" viewBox="0 0 12 10"><g fill="#6e6e6e"><rect x="0.8" y="0.5" width="2" height="2"/><rect x="3.8" y="0.5" width="7.4" height="2"/><rect x="0.8" y="3.9" width="2" height="2"/><rect x="3.8" y="3.9" width="7.4" height="2"/><rect x="0.8" y="7.3" width="2" height="2"/><rect x="3.8" y="7.3" width="7.4" height="2"/></g></svg>
<span id="t72" class="a t" style="left:57.5px;top:681.54px;font:400 12px/12px 'Liberation Sans',sans-serif;color:#000;letter-spacing:-1.016px;">6:</span>
<span id="t73" class="a t" style="left:69.6px;top:681.54px;font:400 12px/12px 'Liberation Sans',sans-serif;color:#000;letter-spacing:-1.218px;">TODO</span>
<div class="a" style="left:57.5px;top:693.4px;width:6.5px;height:1px;background:#000;"></div>
<svg class="a" style="left:122.8px;top:682px;" width="12" height="11" viewBox="0 0 12 11"><rect x="0.2" y="0.4" width="10.8" height="9.8" fill="#6e6e6e"/><path d="M2,2.6L4.6,4.8L2,7" fill="none" stroke="#f2f2f2" stroke-width="1.1"/><path d="M5.4,7.6H8.8" stroke="#f2f2f2" stroke-width="1.1"/></svg>
<span id="t74" class="a t" style="left:139.4px;top:681.54px;font:400 12px/12px 'Liberation Sans',sans-serif;color:#000;letter-spacing:-0.180px;">Terminal</span>
<svg class="a" style="left:208px;top:682px;" width="12" height="12" viewBox="0 0 12 12"><g transform="scale(1.09)" fill="#6e6e6e"><path d="M5,0C2.5,0 2.7,1.1 2.7,1.1V2.3H5.1V2.7H1.6C1.6,2.7 0,2.5 0,5C0,7.5 1.4,7.4 1.4,7.4H2.3V6.2C2.3,6.2 2.2,4.8 3.7,4.8H6.1C6.1,4.8 7.4,4.8 7.4,3.5V1.3C7.4,1.3 7.6,0 5,0Z"/><path d="M5,0C2.5,0 2.7,1.1 2.7,1.1V2.3H5.1V2.7H1.6C1.6,2.7 0,2.5 0,5C0,7.5 1.4,7.4 1.4,7.4H2.3V6.2C2.3,6.2 2.2,4.8 3.7,4.8H6.1C6.1,4.8 7.4,4.8 7.4,3.5V1.3C7.4,1.3 7.6,0 5,0Z" transform="rotate(180 5 5)"/></g></svg>
<span id="t75" class="a t" style="left:224px;top:681.54px;font:400 12px/12px 'Liberation Sans',sans-serif;color:#000;letter-spacing:-0.133px;">Python Console</span>
<svg class="a" style="left:843px;top:682px;" width="13" height="13" viewBox="0 0 13 13"><path d="M6.3,0.1A6.1,6.1 0 1 0 6.3,12.3H12.4V6.2A6.1,6.1 0 0 0 6.3,0.1Z" fill="#62a870"/><path d="M4.6,4.2L6.6,3V9.6" fill="none" stroke="#fff" stroke-width="1.3"/></svg>
<span id="t76" class="a t" style="left:860.3px;top:682.14px;font:400 12px/12px 'Liberation Sans',sans-serif;color:#000;letter-spacing:-0.293px;">Event Log</span>
<div class="a" style="left:8px;top:698px;width:936px;height:15px;background:#f2f2f2;"></div>
<div class="a" style="left:8px;top:699px;width:936px;height:14px;overflow:hidden">
<div class="a" style="left:12px;top:4px;width:9.5px;height:12px;background:transparent;border:1px solid #6e6e6e;box-sizing:border-box"></div>
<div class="a" style="left:9.5px;top:6px;width:1px;height:10px;background:#6e6e6e;"></div>
<span id="t77" class="a t" style="left:31.8px;top:3.84px;font:400 12px/12px 'Liberation Sans',sans-serif;color:#000;letter-spacing:0.538px;">Data Sources Detected: Connection properties are detected. // Configure (3</span>
<span class="a t" style="left:476.2px;top:3.3px;font:400 12px/13px 'Liberation Sans','Noto Sans CJK SC',sans-serif;color:#000;letter-spacing:-0.2px;">分钟之前</span>
<span id="t78" class="a t" style="left:523.6px;top:3.84px;font:400 12px/12px 'Liberation Sans',sans-serif;color:#000;">)</span>
<span id="t79" class="a t" style="left:687px;top:3.84px;font:400 12px/12px 'Liberation Sans',sans-serif;color:#000;letter-spacing:-0.453px;">18:1</span>
<span id="t80" class="a t" style="left:721px;top:3.84px;font:400 12px/12px 'Liberation Sans',sans-serif;color:#000;letter-spacing:-0.981px;">CRLF</span>
<svg class="a" style="left:753.5px;top:4px;" width="7" height="10" viewBox="0 0 7 10"><path d="M3.5,0.6L6.2,3.6H0.8Z M3.5,9.6L6.2,6.6H0.8Z" fill="#555"/></svg>
<span id="t81" class="a t" style="left:773.6px;top:3.84px;font:400 12px/12px 'Liberation Sans',sans-serif;color:#a0a0a0;letter-spacing:-0.200px;">UTF-8</span>
<span id="t82" class="a t" style="left:818px;top:3.84px;font:400 12px/12px 'Liberation Sans',sans-serif;color:#000;letter-spacing:0.381px;">4 spaces</span>
<svg class="a" style="left:873.5px;top:4px;" width="7" height="10" viewBox="0 0 7 10"><path d="M3.5,0.6L6.2,3.6H0.8Z M3.5,9.6L6.2,6.6H0.8Z" fill="#555"/></svg>
<svg class="a" style="left:890px;top:2.5px;" width="14" height="12" viewBox="0 0 14 12"><path d="M2.2,7V4.4A2.6,2.6 0 0 1 7.4,4.4" fill="none" stroke="#6e6e6e" stroke-width="1.5"/><rect x="5.6" y="7" width="7" height="6" fill="#6e6e6e"/></svg>
<svg class="a" style="left:914.5px;top:2.3px;" width="14" height="12" viewBox="0 0 14 12"><path d="M3.4,4.4V3A2,2 0 0 1 5.4,1H8.6A2,2 0 0 1 10.6,3V4.4" fill="none" stroke="#6e6e6e" stroke-width="1.2"/><path d="M1,4.8H13" stroke="#6e6e6e" stroke-width="1.3"/><path d="M3,5.6V8.6A2,2 0 0 0 5,10.6H9A2,2 0 0 0 11,8.6V5.6" fill="none" stroke="#6e6e6e" stroke-width="1.2"/><circle cx="5.2" cy="7.6" r="1" fill="#6e6e6e"/><circle cx="8.8" cy="7.6" r="1" fill="#6e6e6e"/></svg>
</div>
</body></html>
